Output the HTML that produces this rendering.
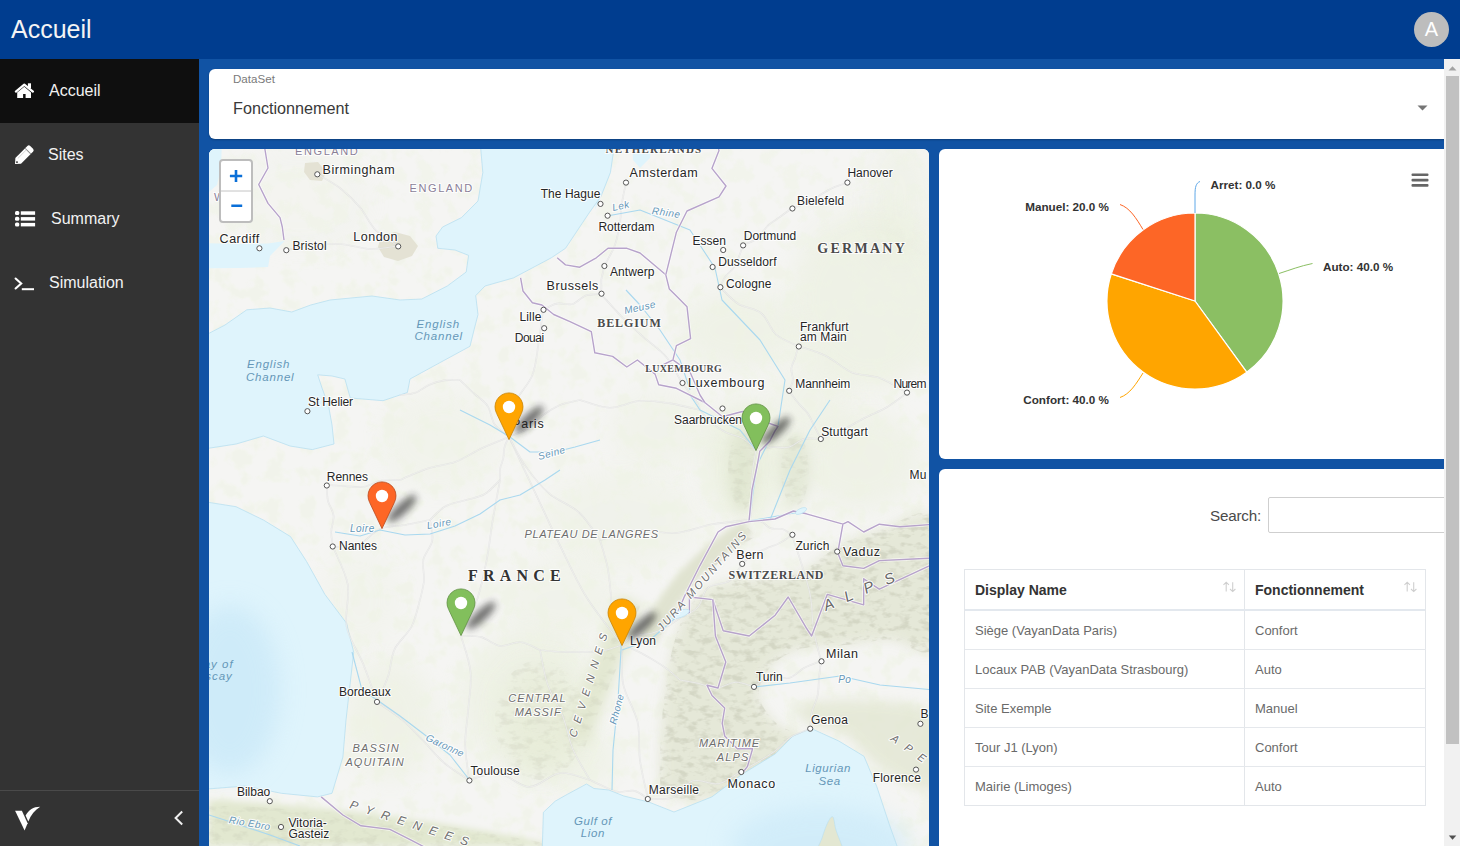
<!DOCTYPE html>
<html><head><meta charset="utf-8">
<style>
*{box-sizing:border-box}
html,body{margin:0;padding:0;width:1460px;height:846px;overflow:hidden;font-family:"Liberation Sans",sans-serif;background:#1153a4}
.abs{position:absolute}
#hdr{left:0;top:0;width:1460px;height:59px;background:#003d8f}
#hdr .t{left:11px;top:14px;font-size:25px;color:#f4f4f4;line-height:30px}
#avatar{left:1414px;top:12px;width:35px;height:35px;border-radius:50%;background:#bdbdbd;color:#fff;font-size:20px;text-align:center;line-height:35px}
#side{left:0;top:59px;width:199px;height:787px;background:#333333}
.item{left:0;width:199px;height:64px;color:#f2f2f2;font-size:16px}
.item .lbl{position:absolute;top:22px;line-height:20px}
#main{left:199px;top:59px;width:1246px;height:787px;background:#1153a4;overflow:hidden}
.card{position:absolute;background:#fff;border-radius:6px}
#scroll{left:1444px;top:59px;width:16px;height:787px;background:#f1f1f1}
.th{font-size:14px;font-weight:bold;color:#333;line-height:18px}
.td{font-size:13px;color:#6a6a6a;letter-spacing:0px;line-height:18px}
.sort{font-size:13px;color:#c8c8c8;letter-spacing:-2px;line-height:14px}
</style></head>
<body>
<div id="hdr" class="abs"><div class="t abs">Accueil</div><div id="avatar" class="abs">A</div></div>
<div id="side" class="abs">
  <div class="item abs" style="top:0;background:#0f0f0f"><div class="lbl" style="left:49px">Accueil</div></div>
  <div class="item abs" style="top:64px"><div class="lbl" style="left:48px">Sites</div></div>
  <div class="item abs" style="top:128px"><div class="lbl" style="left:51px">Summary</div></div>
  <div class="item abs" style="top:192px"><div class="lbl" style="left:49px">Simulation</div></div>
  <div class="abs" style="left:0;top:731px;width:199px;height:1px;background:#4a4a4a"></div>
  <svg class="abs" style="left:0;top:0" width="199" height="787" viewBox="0 59 199 787">
    <!-- home -->
    <path d="M15.9,91.6 L24.3,84.6 L32.9,91.6" fill="none" stroke="#fff" stroke-width="2.3" stroke-linecap="round" stroke-linejoin="round"/>
    <rect x="27.9" y="83.3" width="3.1" height="5" fill="#fff"/>
    <path d="M17.2,92.6 L24.3,86.8 L31,92.4 L31,98 L25.6,98 L25.6,94 L23.1,94 L23.1,98 L17.2,98 Z" fill="#fff"/>
    <!-- pencil -->
    <g transform="translate(15,164) rotate(-45)">
      <path d="M0,0 L4.5,-4 L19,-4 L19,4 L4.5,4 Z" fill="#fff"/>
      <path d="M18,-4 L21.5,-4 Q23.5,-4 23.5,-2 L23.5,2 Q23.5,4 21.5,4 L18,4 Z" fill="#fff"/>
      <rect x="17.8" y="-4" width="0.9" height="8" fill="#888"/>
      <rect x="6" y="-2.2" width="12" height="0.5" fill="#bbb"/>
      <circle cx="2.8" cy="0" r="0.9" fill="#333"/>
    </g>
    <!-- list -->
    <g fill="#fff">
      <rect x="15" y="211" width="4.3" height="4" rx="1.5"/>
      <rect x="15" y="216.8" width="4.3" height="4" rx="1.5"/>
      <rect x="15" y="222.6" width="4.3" height="4" rx="1.5"/>
      <rect x="20.8" y="211.3" width="14.3" height="3.5"/>
      <rect x="20.8" y="217.1" width="14.3" height="3.5"/>
      <rect x="20.8" y="222.9" width="14.3" height="3.5"/>
    </g>
    <!-- terminal -->
    <path d="M15.6,278.5 L21.2,283.5 L15.6,288.5" fill="none" stroke="#fff" stroke-width="2.1" stroke-linecap="round" stroke-linejoin="miter"/>
    <rect x="21.8" y="288.2" width="12.2" height="2" fill="#fff"/>
    <!-- logo -->
    <path d="M15.1,810.8 L21.9,810.8 L27.6,823.2 L24.6,830.6 Z" fill="#fff"/>
    <path d="M25.6,815.6 C29,810 33,806.8 40.2,806.8 C35,810 31,815 28.3,821.5 Z" fill="#fff"/>
    <!-- chevron -->
    <path d="M182.2,811.5 L175.6,818 L182.2,824.5" fill="none" stroke="#f0f0f0" stroke-width="2"/>
  </svg>
</div>
<div id="main" class="abs">
  <div class="card" style="left:10px;top:10px;width:1260px;height:70px;box-shadow:0 1px 2px rgba(0,0,0,0.25)">
    <div class="abs" style="left:24px;top:3px;font-size:11.6px;color:#7a7a7a;line-height:14px">DataSet</div>
    <div class="abs" style="left:24px;top:29px;font-size:16.2px;color:#3a3a3a;line-height:20px">Fonctionnement</div>
    <svg class="abs" style="left:1208px;top:35.5px" width="12" height="7"><path d="M0.5,0.5 L10.5,0.5 L5.5,5.5 Z" fill="#757575"/></svg>
  </div>
  <div class="card" id="map" style="left:10px;top:90px;width:720px;height:720px;overflow:hidden;background:#f3f3ef"><!--MAP--><svg class="abs" style="left:0;top:0" width="720" height="697" viewBox="209 149 720 697" font-family="Liberation Sans, sans-serif">
<defs>
<filter id="blur6" x="-50%" y="-50%" width="200%" height="200%"><feGaussianBlur stdDeviation="6"/></filter>
<filter id="blur12" x="-50%" y="-50%" width="200%" height="200%"><feGaussianBlur stdDeviation="12"/></filter>
<filter id="blur3" x="-50%" y="-50%" width="200%" height="200%"><feGaussianBlur stdDeviation="3"/></filter>
<filter id="shblur" x="-100%" y="-100%" width="300%" height="300%"><feGaussianBlur stdDeviation="3.6"/></filter>
<filter id="noise" x="0" y="0" width="100%" height="100%">
  <feTurbulence type="fractalNoise" baseFrequency="0.09 0.16" numOctaves="3" seed="11" result="t"/>
  <feColorMatrix in="t" type="matrix" values="0 0 0 0 0.50  0 0 0 0 0.51  0 0 0 0 0.40  0 0 0 -4.0 2.05"/>
</filter>
<filter id="forest" x="0" y="0" width="100%" height="100%">
  <feTurbulence type="fractalNoise" baseFrequency="0.06" numOctaves="3" seed="23" result="t"/>
  <feColorMatrix in="t" type="matrix" values="0 0 0 0 0.86  0 0 0 0 0.90  0 0 0 0 0.78  0 0 0 5.0 -2.4"/>
</filter>
<clipPath id="mcclip"><ellipse cx="540" cy="720" rx="45" ry="60"/><path d="M209,805 C300,808 420,818 560,846 L209,846 Z"/><ellipse cx="742" cy="470" rx="14" ry="40"/><ellipse cx="795" cy="470" rx="14" ry="36"/><path d="M568,745 C585,700 605,660 626,600 L640,606 C620,665 600,705 584,750 Z"/></clipPath>
<clipPath id="alpsclip"><path d="M660.0,780.0 C659.0,767.5 660.3,740.0 662.0,720.0 C663.7,700.0 666.0,678.0 670.0,660.0 C674.0,642.0 678.5,624.5 686.0,612.0 C693.5,599.5 702.7,590.7 715.0,585.0 C727.3,579.3 745.8,580.2 760.0,578.0 C774.2,575.8 786.7,577.5 800.0,572.0 C813.3,566.5 826.7,552.0 840.0,545.0 C853.3,538.0 864.2,534.2 880.0,530.0 C895.8,525.8 925.8,500.8 935.0,520.0 C944.2,539.2 942.5,625.0 935.0,645.0 C927.5,665.0 905.0,640.0 890.0,640.0 C875.0,640.0 859.2,643.7 845.0,645.0 C830.8,646.3 816.2,645.5 805.0,648.0 C793.8,650.5 785.2,654.7 778.0,660.0 C770.8,665.3 765.0,673.3 762.0,680.0 C759.0,686.7 757.8,693.0 760.0,700.0 C762.2,707.0 768.0,715.0 775.0,722.0 C782.0,729.0 801.8,733.7 802.0,742.0 C802.2,750.3 786.0,764.0 776.0,772.0 C766.0,780.0 754.7,785.3 742.0,790.0 C729.3,794.7 712.3,799.2 700.0,800.0 C687.7,800.8 674.7,798.3 668.0,795.0 C661.3,791.7 661.0,792.5 660.0,780.0 Z"/><path d="M648,640 C668,592 700,556 748,528 L756,536 C708,566 676,600 656,646 Z"/></clipPath>
</defs>
<rect x="209" y="149" width="720" height="697" fill="#f5f5f3"/>
<ellipse cx="745" cy="460" rx="40" ry="60" fill="#e4ecd2" opacity="0.56" filter="url(#blur12)"/>
<ellipse cx="870" cy="300" rx="80" ry="90" fill="#e4ecd2" opacity="0.39" filter="url(#blur12)"/>
<ellipse cx="740" cy="330" rx="60" ry="40" fill="#e4ecd2" opacity="0.35" filter="url(#blur12)"/>
<ellipse cx="530" cy="700" rx="70" ry="70" fill="#e4ecd2" opacity="0.39" filter="url(#blur12)"/>
<ellipse cx="620" cy="520" rx="80" ry="50" fill="#e4ecd2" opacity="0.24" filter="url(#blur12)"/>
<ellipse cx="390" cy="720" rx="45" ry="60" fill="#e4ecd2" opacity="0.35" filter="url(#blur12)"/>
<ellipse cx="300" cy="200" rx="70" ry="50" fill="#e4ecd2" opacity="0.10" filter="url(#blur12)"/>
<ellipse cx="570" cy="760" rx="50" ry="30" fill="#e4ecd2" opacity="0.32" filter="url(#blur12)"/>
<ellipse cx="860" cy="460" rx="60" ry="50" fill="#e4ecd2" opacity="0.35" filter="url(#blur12)"/>
<ellipse cx="440" cy="440" rx="60" ry="50" fill="#e4ecd2" opacity="0.21" filter="url(#blur12)"/>
<ellipse cx="900" cy="200" rx="30" ry="60" fill="#e4ecd2" opacity="0.28" filter="url(#blur12)"/>
<ellipse cx="660" cy="430" rx="50" ry="40" fill="#e4ecd2" opacity="0.24" filter="url(#blur12)"/>
<ellipse cx="560" cy="600" rx="60" ry="40" fill="#e4ecd2" opacity="0.24" filter="url(#blur12)"/>
<ellipse cx="360" cy="600" rx="40" ry="50" fill="#e4ecd2" opacity="0.17" filter="url(#blur12)"/>
<ellipse cx="810" cy="400" rx="40" ry="40" fill="#e4ecd2" opacity="0.28" filter="url(#blur12)"/>
<rect x="209" y="149" width="720" height="697" fill="#000" filter="url(#forest)" opacity="0.55"/>
<path d="M660.0,780.0 C659.0,767.5 660.3,740.0 662.0,720.0 C663.7,700.0 666.0,678.0 670.0,660.0 C674.0,642.0 678.5,624.5 686.0,612.0 C693.5,599.5 702.7,590.7 715.0,585.0 C727.3,579.3 745.8,580.2 760.0,578.0 C774.2,575.8 786.7,577.5 800.0,572.0 C813.3,566.5 826.7,552.0 840.0,545.0 C853.3,538.0 864.2,534.2 880.0,530.0 C895.8,525.8 925.8,500.8 935.0,520.0 C944.2,539.2 942.5,625.0 935.0,645.0 C927.5,665.0 905.0,640.0 890.0,640.0 C875.0,640.0 859.2,643.7 845.0,645.0 C830.8,646.3 816.2,645.5 805.0,648.0 C793.8,650.5 785.2,654.7 778.0,660.0 C770.8,665.3 765.0,673.3 762.0,680.0 C759.0,686.7 757.8,693.0 760.0,700.0 C762.2,707.0 768.0,715.0 775.0,722.0 C782.0,729.0 801.8,733.7 802.0,742.0 C802.2,750.3 786.0,764.0 776.0,772.0 C766.0,780.0 754.7,785.3 742.0,790.0 C729.3,794.7 712.3,799.2 700.0,800.0 C687.7,800.8 674.7,798.3 668.0,795.0 C661.3,791.7 661.0,792.5 660.0,780.0 Z" fill="#e4e7d6" opacity="0.9" filter="url(#blur6)"/>
<path d="M800.0,705.0 C809.2,701.3 837.5,698.3 860.0,700.0 C882.5,701.7 922.5,700.0 935.0,715.0 C947.5,730.0 944.2,781.2 935.0,790.0 C925.8,798.8 895.0,777.2 880.0,768.0 C865.0,758.8 857.5,742.7 845.0,735.0 C832.5,727.3 812.5,727.0 805.0,722.0 C797.5,717.0 790.8,708.7 800.0,705.0 Z" fill="#e3e7d3" opacity="0.8" filter="url(#blur6)"/>
<g clip-path="url(#alpsclip)"><rect x="640" y="490" width="300" height="320" fill="#000" filter="url(#noise)" opacity="0.4"/></g>
<path d="M648,640 C668,592 700,556 748,528" stroke="#e0e3d0" stroke-width="18" fill="none" filter="url(#blur3)"/>
<ellipse cx="742" cy="470" rx="14" ry="42" fill="#dfe5cf" opacity="0.8" filter="url(#blur6)"/>
<ellipse cx="795" cy="470" rx="16" ry="38" fill="#dfe5cf" opacity="0.7" filter="url(#blur6)"/>
<path d="M209,800 C300,805 420,815 560,846 L209,846 Z" fill="#e2e8d0" filter="url(#blur3)"/>
<ellipse cx="540" cy="720" rx="40" ry="55" fill="#e6ebd6" opacity="0.7" filter="url(#blur12)"/>
<path d="M575,740 C590,700 610,660 630,600" stroke="#e3e8d2" stroke-width="26" fill="none" filter="url(#blur6)"/>
<g clip-path="url(#mcclip)"><rect x="209" y="400" width="620" height="446" fill="#000" filter="url(#noise)" opacity="0.2"/></g>
<path d="M381,236 L395,232 L410,236 L418,246 L412,256 L398,261 L384,257 L378,247 Z" fill="#e4e2d4"/>
<path d="M305,163 L318,162 L326,172 L322,181 L310,180 L304,172 Z" fill="#e4e2d4"/>
<path d="M480.0,140.0 L482.8,172.6 L478.0,201.0 L461.5,217.6 L442.6,227.0 L436.0,236.0 L437.8,248.3 L455.0,250.0 L468.6,255.4 L466.2,272.0 L447.3,286.0 L421.8,299.0 L400.0,300.0 L372.0,296.0 L350.9,298.0 L330.0,300.0 L310.7,305.0 L291.8,312.0 L270.0,308.0 L246.8,309.8 L225.0,325.0 L200.0,338.0 L200.0,449.6 L236.2,444.0 L263.4,436.0 L290.0,446.0 L312.3,449.6 L334.0,444.0 L332.0,425.0 L328.6,406.0 L322.0,388.0 L317.7,374.8 L332.0,376.0 L344.9,379.0 L350.3,398.0 L383.0,400.7 L407.4,392.5 L410.0,379.0 L440.0,362.6 L470.0,346.3 L474.0,330.0 L478.0,314.5 L475.7,295.6 L485.0,286.0 L513.5,277.9 L551.3,257.8 L565.5,248.3 L579.7,227.0 L589.2,212.8 L601.0,196.3 L610.4,172.6 L615.2,140.0 Z" fill="#dff4fc"/>
<path d="M200.0,243.0 L240.0,244.0 L268.0,243.6 L284.7,241.0 L270.0,256.0 L268.0,267.0 L240.0,268.0 L200.0,268.4 Z" fill="#dff4fc"/>
<path d="M200.0,140.0 L222.0,140.0 L221.0,168.0 L217.0,185.0 L209.0,192.0 L200.0,192.0 Z" fill="#dff4fc"/>
<path d="M200.0,501.0 L236.0,506.7 L263.4,520.0 L290.5,536.6 L306.7,561.7 L324.8,594.3 L346.5,623.2 L353.7,652.2 L350.0,684.7 L346.0,720.0 L342.9,757.0 L332.0,793.3 L317.5,796.9 L281.4,793.3 L245.2,786.0 L200.0,789.6 Z" fill="#dff4fc"/>
<path d="M541.9,860.0 L543.4,812.3 L555.3,801.1 L567.2,794.4 L586.5,784.0 L594.0,788.5 L608.9,790.0 L623.8,796.0 L648.7,802.0 L674.0,812.0 L712.0,796.8 L742.5,774.0 L775.4,753.8 L793.0,736.0 L811.0,728.4 L838.8,741.0 L864.0,756.3 L876.8,786.7 L889.4,824.7 L902.0,860.0 Z" fill="#dff4fc"/>
<path d="M600.0,140.0 L615.2,140.0 L610.4,172.6 L601.0,196.3 L595.0,210.0 Z" fill="#dff4fc"/>
<path d="M632.0,140.0 L652.0,140.0 L650.0,158.0 L640.0,168.0 L633.0,160.0 Z" fill="#dff4fc"/>
<ellipse cx="230" cy="690" rx="50" ry="85" fill="#c9e8f8" opacity="0.75" filter="url(#blur12)"/>
<ellipse cx="820" cy="846" rx="90" ry="40" fill="#c9e8f8" opacity="0.6" filter="url(#blur12)"/>
<path d="M816.0,860.0 C812.0,856.3 820.0,844.3 822.0,838.0 C824.0,831.7 826.2,825.5 828.0,822.0 C829.8,818.5 831.7,815.7 833.0,817.0 C834.3,818.3 834.5,825.2 836.0,830.0 C837.5,834.8 840.3,841.0 842.0,846.0 C843.7,851.0 850.3,857.7 846.0,860.0 C841.7,862.3 820.0,863.7 816.0,860.0 Z" fill="#e3e7d2" stroke="#b9dff0" stroke-width="0.6"/>
<path d="M480.0,140.0 L482.8,172.6 L478.0,201.0 L461.5,217.6 L442.6,227.0 L436.0,236.0 L437.8,248.3 L455.0,250.0 L468.6,255.4 L466.2,272.0 L447.3,286.0 L421.8,299.0 L400.0,300.0 L372.0,296.0 L350.9,298.0 L330.0,300.0 L310.7,305.0 L291.8,312.0 L270.0,308.0 L246.8,309.8 L225.0,325.0 L200.0,338.0 L200.0,449.6 L236.2,444.0 L263.4,436.0 L290.0,446.0 L312.3,449.6 L334.0,444.0 L332.0,425.0 L328.6,406.0 L322.0,388.0 L317.7,374.8 L332.0,376.0 L344.9,379.0 L350.3,398.0 L383.0,400.7 L407.4,392.5 L410.0,379.0 L440.0,362.6 L470.0,346.3 L474.0,330.0 L478.0,314.5 L475.7,295.6 L485.0,286.0 L513.5,277.9 L551.3,257.8 L565.5,248.3 L579.7,227.0 L589.2,212.8 L601.0,196.3 L610.4,172.6 L615.2,140.0" fill="none" stroke="#b9dff0" stroke-width="0.8"/>
<path d="M200.0,501.0 L236.0,506.7 L263.4,520.0 L290.5,536.6 L306.7,561.7 L324.8,594.3 L346.5,623.2 L353.7,652.2 L350.0,684.7 L346.0,720.0 L342.9,757.0 L332.0,793.3 L317.5,796.9 L281.4,793.3 L245.2,786.0 L200.0,789.6" fill="none" stroke="#b9dff0" stroke-width="0.8"/>
<path d="M541.9,860.0 L543.4,812.3 L555.3,801.1 L567.2,794.4 L586.5,784.0 L594.0,788.5 L608.9,790.0 L623.8,796.0 L648.7,802.0 L674.0,812.0 L712.0,796.8 L742.5,774.0 L775.4,753.8 L793.0,736.0 L811.0,728.4 L838.8,741.0 L864.0,756.3 L876.8,786.7 L889.4,824.7 L902.0,860.0" fill="none" stroke="#b9dff0" stroke-width="0.8"/>
<path d="M509.0,437.0 C513.2,445.9 525.8,472.8 534.2,490.7 C542.6,508.5 550.8,526.6 559.5,544.3 C568.2,562.0 576.0,580.2 586.4,597.0 C596.8,613.8 616.1,637.0 622.0,645.0" fill="none" stroke="#d6d6d6" stroke-width="1.6" opacity="0.55"/>
<path d="M509.0,437.0 C513.2,445.9 525.8,472.8 534.2,490.7 C542.6,508.5 550.8,526.6 559.5,544.3 C568.2,562.0 576.0,580.2 586.4,597.0 C596.8,613.8 616.1,637.0 622.0,645.0" fill="none" stroke="#fbfbfb" stroke-width="0.6" opacity="0.8"/>
<path d="M509.0,437.0 C508.2,438.7 505.4,443.7 504.5,447.3 C503.5,450.8 504.0,454.7 503.3,458.2 C502.5,461.8 500.6,465.2 500.1,468.8 C499.5,472.4 500.0,478.1 500.0,480.0" fill="none" stroke="#d6d6d6" stroke-width="1.6" opacity="0.55"/>
<path d="M509.0,437.0 C508.2,438.7 505.4,443.7 504.5,447.3 C503.5,450.8 504.0,454.7 503.3,458.2 C502.5,461.8 500.6,465.2 500.1,468.8 C499.5,472.4 500.0,478.1 500.0,480.0" fill="none" stroke="#fbfbfb" stroke-width="0.6" opacity="0.8"/>
<path d="M500.0,480.0 C497.5,482.3 490.6,490.6 484.8,494.0 C479.0,497.3 471.7,498.2 465.2,500.3 C458.6,502.3 451.2,503.0 445.4,506.3 C439.5,509.6 432.6,517.7 430.0,520.0" fill="none" stroke="#d6d6d6" stroke-width="1.6" opacity="0.55"/>
<path d="M500.0,480.0 C497.5,482.3 490.6,490.6 484.8,494.0 C479.0,497.3 471.7,498.2 465.2,500.3 C458.6,502.3 451.2,503.0 445.4,506.3 C439.5,509.6 432.6,517.7 430.0,520.0" fill="none" stroke="#fbfbfb" stroke-width="0.6" opacity="0.8"/>
<path d="M430.0,520.0 C425.9,520.8 413.6,523.5 405.3,525.0 C397.0,526.5 388.0,525.5 380.2,528.8 C372.4,532.1 366.4,541.7 358.5,544.8 C350.6,547.8 337.3,546.6 333.0,547.0" fill="none" stroke="#d6d6d6" stroke-width="1.6" opacity="0.55"/>
<path d="M430.0,520.0 C425.9,520.8 413.6,523.5 405.3,525.0 C397.0,526.5 388.0,525.5 380.2,528.8 C372.4,532.1 366.4,541.7 358.5,544.8 C350.6,547.8 337.3,546.6 333.0,547.0" fill="none" stroke="#fbfbfb" stroke-width="0.6" opacity="0.8"/>
<path d="M509.0,437.0 C504.5,438.9 490.8,444.0 481.9,448.2 C473.0,452.3 465.0,458.4 455.8,461.8 C446.7,465.2 436.3,465.6 427.0,468.7 C417.7,471.7 404.5,478.1 400.0,480.0" fill="none" stroke="#d6d6d6" stroke-width="1.6" opacity="0.55"/>
<path d="M509.0,437.0 C504.5,438.9 490.8,444.0 481.9,448.2 C473.0,452.3 465.0,458.4 455.8,461.8 C446.7,465.2 436.3,465.6 427.0,468.7 C417.7,471.7 404.5,478.1 400.0,480.0" fill="none" stroke="#fbfbfb" stroke-width="0.6" opacity="0.8"/>
<path d="M400.0,480.0 C397.0,480.1 387.7,479.5 381.7,480.6 C375.7,481.7 369.8,485.8 363.8,486.8 C357.7,487.7 351.6,486.5 345.4,486.2 C339.3,485.9 330.1,485.2 327.0,485.0" fill="none" stroke="#d6d6d6" stroke-width="1.6" opacity="0.55"/>
<path d="M400.0,480.0 C397.0,480.1 387.7,479.5 381.7,480.6 C375.7,481.7 369.8,485.8 363.8,486.8 C357.7,487.7 351.6,486.5 345.4,486.2 C339.3,485.9 330.1,485.2 327.0,485.0" fill="none" stroke="#fbfbfb" stroke-width="0.6" opacity="0.8"/>
<path d="M509.0,437.0 C509.9,431.6 510.2,414.7 514.1,404.4 C518.0,394.1 528.3,385.5 532.3,375.2 C536.4,364.9 536.8,353.7 538.5,342.8 C540.3,332.0 542.3,315.5 543.0,310.0" fill="none" stroke="#d6d6d6" stroke-width="1.6" opacity="0.55"/>
<path d="M509.0,437.0 C509.9,431.6 510.2,414.7 514.1,404.4 C518.0,394.1 528.3,385.5 532.3,375.2 C536.4,364.9 536.8,353.7 538.5,342.8 C540.3,332.0 542.3,315.5 543.0,310.0" fill="none" stroke="#fbfbfb" stroke-width="0.6" opacity="0.8"/>
<path d="M543.0,310.0 C545.3,308.9 551.9,304.6 556.8,303.6 C561.8,302.6 567.7,305.4 572.6,304.1 C577.4,302.7 581.1,297.2 585.8,295.5 C590.5,293.8 598.5,294.2 601.0,294.0" fill="none" stroke="#d6d6d6" stroke-width="1.6" opacity="0.55"/>
<path d="M543.0,310.0 C545.3,308.9 551.9,304.6 556.8,303.6 C561.8,302.6 567.7,305.4 572.6,304.1 C577.4,302.7 581.1,297.2 585.8,295.5 C590.5,293.8 598.5,294.2 601.0,294.0" fill="none" stroke="#fbfbfb" stroke-width="0.6" opacity="0.8"/>
<path d="M509.0,437.0 C512.0,435.6 521.6,432.4 527.3,428.8 C532.9,425.1 537.4,419.3 542.8,415.3 C548.3,411.4 553.8,407.6 560.0,405.0 C566.2,402.5 576.7,400.8 580.0,400.0" fill="none" stroke="#d6d6d6" stroke-width="1.6" opacity="0.55"/>
<path d="M509.0,437.0 C512.0,435.6 521.6,432.4 527.3,428.8 C532.9,425.1 537.4,419.3 542.8,415.3 C548.3,411.4 553.8,407.6 560.0,405.0 C566.2,402.5 576.7,400.8 580.0,400.0" fill="none" stroke="#fbfbfb" stroke-width="0.6" opacity="0.8"/>
<path d="M580.0,400.0 C584.9,401.3 599.5,407.7 609.6,407.8 C619.6,408.0 630.2,401.6 640.3,400.8 C650.5,400.1 660.4,401.9 670.3,403.4 C680.3,404.9 695.1,408.9 700.0,410.0" fill="none" stroke="#d6d6d6" stroke-width="1.6" opacity="0.55"/>
<path d="M580.0,400.0 C584.9,401.3 599.5,407.7 609.6,407.8 C619.6,408.0 630.2,401.6 640.3,400.8 C650.5,400.1 660.4,401.9 670.3,403.4 C680.3,404.9 695.1,408.9 700.0,410.0" fill="none" stroke="#fbfbfb" stroke-width="0.6" opacity="0.8"/>
<path d="M700.0,410.0 C701.9,412.2 707.3,419.5 711.7,423.2 C716.1,427.0 721.0,429.9 726.2,432.5 C731.4,435.1 738.0,435.7 743.0,438.6 C748.0,441.5 753.8,448.1 756.0,450.0" fill="none" stroke="#d6d6d6" stroke-width="1.6" opacity="0.55"/>
<path d="M700.0,410.0 C701.9,412.2 707.3,419.5 711.7,423.2 C716.1,427.0 721.0,429.9 726.2,432.5 C731.4,435.1 738.0,435.7 743.0,438.6 C748.0,441.5 753.8,448.1 756.0,450.0" fill="none" stroke="#fbfbfb" stroke-width="0.6" opacity="0.8"/>
<path d="M700.0,410.0 C699.5,408.7 698.5,404.5 697.0,402.3 C695.5,400.0 692.8,398.6 691.1,396.4 C689.5,394.3 688.6,391.6 687.1,389.4 C685.6,387.1 682.8,384.1 682.0,383.0" fill="none" stroke="#d6d6d6" stroke-width="1.6" opacity="0.55"/>
<path d="M700.0,410.0 C699.5,408.7 698.5,404.5 697.0,402.3 C695.5,400.0 692.8,398.6 691.1,396.4 C689.5,394.3 688.6,391.6 687.1,389.4 C685.6,387.1 682.8,384.1 682.0,383.0" fill="none" stroke="#fbfbfb" stroke-width="0.6" opacity="0.8"/>
<path d="M509.0,437.0 C506.6,434.9 498.3,429.7 494.7,424.5 C491.2,419.3 491.0,411.1 487.5,405.9 C484.0,400.7 478.1,397.4 473.6,393.1 C469.0,388.8 462.3,382.2 460.0,380.0" fill="none" stroke="#d6d6d6" stroke-width="1.6" opacity="0.55"/>
<path d="M509.0,437.0 C506.6,434.9 498.3,429.7 494.7,424.5 C491.2,419.3 491.0,411.1 487.5,405.9 C484.0,400.7 478.1,397.4 473.6,393.1 C469.0,388.8 462.3,382.2 460.0,380.0" fill="none" stroke="#fbfbfb" stroke-width="0.6" opacity="0.8"/>
<path d="M460.0,380.0 C457.4,380.1 449.3,379.6 444.2,380.4 C439.0,381.2 434.1,382.6 429.3,384.7 C424.5,386.7 420.2,391.0 415.4,392.7 C410.5,394.4 402.6,394.6 400.0,395.0" fill="none" stroke="#d6d6d6" stroke-width="1.6" opacity="0.55"/>
<path d="M460.0,380.0 C457.4,380.1 449.3,379.6 444.2,380.4 C439.0,381.2 434.1,382.6 429.3,384.7 C424.5,386.7 420.2,391.0 415.4,392.7 C410.5,394.4 402.6,394.6 400.0,395.0" fill="none" stroke="#fbfbfb" stroke-width="0.6" opacity="0.8"/>
<path d="M500.0,480.0 C498.8,486.6 495.1,506.4 492.8,519.6 C490.6,532.9 489.3,546.4 486.8,559.6 C484.2,572.7 481.7,585.9 477.4,598.7 C473.1,611.4 463.7,629.8 461.0,636.0" fill="none" stroke="#d6d6d6" stroke-width="1.6" opacity="0.55"/>
<path d="M500.0,480.0 C498.8,486.6 495.1,506.4 492.8,519.6 C490.6,532.9 489.3,546.4 486.8,559.6 C484.2,572.7 481.7,585.9 477.4,598.7 C473.1,611.4 463.7,629.8 461.0,636.0" fill="none" stroke="#fbfbfb" stroke-width="0.6" opacity="0.8"/>
<path d="M461.0,636.0 C462.6,641.9 469.3,659.6 470.5,671.6 C471.8,683.6 469.3,695.7 468.4,707.8 C467.5,719.9 465.1,732.1 465.2,744.1 C465.3,756.1 468.4,774.0 469.0,780.0" fill="none" stroke="#d6d6d6" stroke-width="1.6" opacity="0.55"/>
<path d="M461.0,636.0 C462.6,641.9 469.3,659.6 470.5,671.6 C471.8,683.6 469.3,695.7 468.4,707.8 C467.5,719.9 465.1,732.1 465.2,744.1 C465.3,756.1 468.4,774.0 469.0,780.0" fill="none" stroke="#fbfbfb" stroke-width="0.6" opacity="0.8"/>
<path d="M430.0,520.0 C430.4,523.4 433.4,534.0 432.3,540.6 C431.1,547.2 424.7,553.2 423.3,559.8 C421.9,566.4 424.6,573.5 424.1,580.2 C423.5,586.9 420.7,596.7 420.0,600.0" fill="none" stroke="#d6d6d6" stroke-width="1.6" opacity="0.55"/>
<path d="M430.0,520.0 C430.4,523.4 433.4,534.0 432.3,540.6 C431.1,547.2 424.7,553.2 423.3,559.8 C421.9,566.4 424.6,573.5 424.1,580.2 C423.5,586.9 420.7,596.7 420.0,600.0" fill="none" stroke="#fbfbfb" stroke-width="0.6" opacity="0.8"/>
<path d="M420.0,600.0 C418.6,604.4 415.8,618.3 411.6,626.5 C407.3,634.7 398.5,641.0 394.6,649.4 C390.7,657.7 390.9,667.8 388.0,676.6 C385.1,685.4 378.8,697.8 377.0,702.0" fill="none" stroke="#d6d6d6" stroke-width="1.6" opacity="0.55"/>
<path d="M420.0,600.0 C418.6,604.4 415.8,618.3 411.6,626.5 C407.3,634.7 398.5,641.0 394.6,649.4 C390.7,657.7 390.9,667.8 388.0,676.6 C385.1,685.4 378.8,697.8 377.0,702.0" fill="none" stroke="#fbfbfb" stroke-width="0.6" opacity="0.8"/>
<path d="M377.0,702.0 C381.1,704.9 394.0,713.0 401.7,719.5 C409.4,725.9 416.1,733.6 423.2,740.8 C430.2,748.0 436.4,756.2 444.1,762.8 C451.7,769.3 464.8,777.1 469.0,780.0" fill="none" stroke="#d6d6d6" stroke-width="1.6" opacity="0.55"/>
<path d="M377.0,702.0 C381.1,704.9 394.0,713.0 401.7,719.5 C409.4,725.9 416.1,733.6 423.2,740.8 C430.2,748.0 436.4,756.2 444.1,762.8 C451.7,769.3 464.8,777.1 469.0,780.0" fill="none" stroke="#fbfbfb" stroke-width="0.6" opacity="0.8"/>
<path d="M469.0,780.0 C474.0,778.9 489.2,772.4 499.2,773.6 C509.3,774.7 519.4,787.0 529.5,786.9 C539.6,786.8 549.7,774.2 559.8,773.1 C569.8,771.9 585.0,778.8 590.0,780.0" fill="none" stroke="#d6d6d6" stroke-width="1.6" opacity="0.55"/>
<path d="M469.0,780.0 C474.0,778.9 489.2,772.4 499.2,773.6 C509.3,774.7 519.4,787.0 529.5,786.9 C539.6,786.8 549.7,774.2 559.8,773.1 C569.8,771.9 585.0,778.8 590.0,780.0" fill="none" stroke="#fbfbfb" stroke-width="0.6" opacity="0.8"/>
<path d="M590.0,780.0 C592.3,781.1 599.2,784.5 603.9,786.5 C608.6,788.5 613.1,791.2 618.2,791.9 C623.3,792.6 629.6,789.7 634.6,790.9 C639.6,792.1 645.8,797.6 648.0,799.0" fill="none" stroke="#d6d6d6" stroke-width="1.6" opacity="0.55"/>
<path d="M590.0,780.0 C592.3,781.1 599.2,784.5 603.9,786.5 C608.6,788.5 613.1,791.2 618.2,791.9 C623.3,792.6 629.6,789.7 634.6,790.9 C639.6,792.1 645.8,797.6 648.0,799.0" fill="none" stroke="#fbfbfb" stroke-width="0.6" opacity="0.8"/>
<path d="M622.0,645.0 C622.2,651.6 620.6,671.6 623.2,684.4 C625.8,697.2 634.7,708.9 637.5,721.6 C640.3,734.3 638.3,747.8 640.0,760.7 C641.8,773.6 646.7,792.6 648.0,799.0" fill="none" stroke="#d6d6d6" stroke-width="1.6" opacity="0.55"/>
<path d="M622.0,645.0 C622.2,651.6 620.6,671.6 623.2,684.4 C625.8,697.2 634.7,708.9 637.5,721.6 C640.3,734.3 638.3,747.8 640.0,760.7 C641.8,773.6 646.7,792.6 648.0,799.0" fill="none" stroke="#fbfbfb" stroke-width="0.6" opacity="0.8"/>
<path d="M622.0,645.0 C618.6,646.0 608.6,649.9 601.8,651.1 C595.0,652.2 588.1,651.8 581.3,652.0 C574.4,652.1 567.6,652.2 560.7,651.9 C553.8,651.6 543.4,650.3 540.0,650.0" fill="none" stroke="#d6d6d6" stroke-width="1.6" opacity="0.55"/>
<path d="M622.0,645.0 C618.6,646.0 608.6,649.9 601.8,651.1 C595.0,652.2 588.1,651.8 581.3,652.0 C574.4,652.1 567.6,652.2 560.7,651.9 C553.8,651.6 543.4,650.3 540.0,650.0" fill="none" stroke="#fbfbfb" stroke-width="0.6" opacity="0.8"/>
<path d="M540.0,650.0 C536.8,648.7 527.7,642.9 521.0,642.2 C514.3,641.5 506.6,646.7 500.0,645.9 C493.4,645.0 487.7,638.7 481.2,637.1 C474.7,635.4 464.4,636.2 461.0,636.0" fill="none" stroke="#d6d6d6" stroke-width="1.6" opacity="0.55"/>
<path d="M540.0,650.0 C536.8,648.7 527.7,642.9 521.0,642.2 C514.3,641.5 506.6,646.7 500.0,645.9 C493.4,645.0 487.7,638.7 481.2,637.1 C474.7,635.4 464.4,636.2 461.0,636.0" fill="none" stroke="#fbfbfb" stroke-width="0.6" opacity="0.8"/>
<path d="M509.0,437.0 C511.9,442.1 519.8,458.1 526.4,467.4 C533.1,476.8 540.2,485.8 549.0,493.3 C557.8,500.8 570.7,504.8 579.2,512.6 C587.7,520.3 596.5,535.4 600.0,540.0" fill="none" stroke="#d6d6d6" stroke-width="1.6" opacity="0.55"/>
<path d="M509.0,437.0 C511.9,442.1 519.8,458.1 526.4,467.4 C533.1,476.8 540.2,485.8 549.0,493.3 C557.8,500.8 570.7,504.8 579.2,512.6 C587.7,520.3 596.5,535.4 600.0,540.0" fill="none" stroke="#fbfbfb" stroke-width="0.6" opacity="0.8"/>
<path d="M600.0,540.0 C601.2,544.3 605.5,557.1 607.3,565.9 C609.1,574.6 609.7,583.6 610.7,592.6 C611.6,601.5 611.1,610.7 613.0,619.5 C614.9,628.2 620.5,640.7 622.0,645.0" fill="none" stroke="#d6d6d6" stroke-width="1.6" opacity="0.55"/>
<path d="M600.0,540.0 C601.2,544.3 605.5,557.1 607.3,565.9 C609.1,574.6 609.7,583.6 610.7,592.6 C611.6,601.5 611.1,610.7 613.0,619.5 C614.9,628.2 620.5,640.7 622.0,645.0" fill="none" stroke="#fbfbfb" stroke-width="0.6" opacity="0.8"/>
<path d="M622.0,645.0 C624.2,643.4 630.3,637.5 635.2,635.5 C640.2,633.6 646.6,634.7 651.8,633.2 C657.0,631.8 661.8,629.4 666.5,626.8 C671.2,624.3 677.7,619.5 680.0,618.0" fill="none" stroke="#d6d6d6" stroke-width="1.6" opacity="0.55"/>
<path d="M622.0,645.0 C624.2,643.4 630.3,637.5 635.2,635.5 C640.2,633.6 646.6,634.7 651.8,633.2 C657.0,631.8 661.8,629.4 666.5,626.8 C671.2,624.3 677.7,619.5 680.0,618.0" fill="none" stroke="#fbfbfb" stroke-width="0.6" opacity="0.8"/>
<path d="M680.0,618.0 C683.0,616.2 693.2,612.3 697.8,607.2 C702.5,602.1 702.7,591.9 708.0,587.6 C713.3,583.2 723.7,584.7 729.4,580.8 C735.1,576.9 739.9,566.8 742.0,564.0" fill="none" stroke="#d6d6d6" stroke-width="1.6" opacity="0.55"/>
<path d="M680.0,618.0 C683.0,616.2 693.2,612.3 697.8,607.2 C702.5,602.1 702.7,591.9 708.0,587.6 C713.3,583.2 723.7,584.7 729.4,580.8 C735.1,576.9 739.9,566.8 742.0,564.0" fill="none" stroke="#fbfbfb" stroke-width="0.6" opacity="0.8"/>
<path d="M742.0,564.0 C743.8,562.4 749.0,556.9 753.1,554.3 C757.2,551.7 762.0,550.4 766.4,548.5 C770.9,546.6 775.6,545.2 779.9,542.9 C784.1,540.7 790.0,536.3 792.0,535.0" fill="none" stroke="#d6d6d6" stroke-width="1.6" opacity="0.55"/>
<path d="M742.0,564.0 C743.8,562.4 749.0,556.9 753.1,554.3 C757.2,551.7 762.0,550.4 766.4,548.5 C770.9,546.6 775.6,545.2 779.9,542.9 C784.1,540.7 790.0,536.3 792.0,535.0" fill="none" stroke="#fbfbfb" stroke-width="0.6" opacity="0.8"/>
<path d="M792.0,535.0 C790.4,534.0 785.8,530.3 782.3,529.1 C778.7,528.0 774.2,529.6 770.7,528.3 C767.2,527.1 764.7,523.0 761.3,521.6 C757.8,520.2 751.9,520.3 750.0,520.0" fill="none" stroke="#d6d6d6" stroke-width="1.6" opacity="0.55"/>
<path d="M792.0,535.0 C790.4,534.0 785.8,530.3 782.3,529.1 C778.7,528.0 774.2,529.6 770.7,528.3 C767.2,527.1 764.7,523.0 761.3,521.6 C757.8,520.2 751.9,520.3 750.0,520.0" fill="none" stroke="#fbfbfb" stroke-width="0.6" opacity="0.8"/>
<path d="M750.0,520.0 C750.3,517.1 751.6,508.4 751.9,502.5 C752.1,496.7 751.2,490.7 751.4,484.9 C751.6,479.0 752.2,473.2 753.0,467.4 C753.7,461.6 755.5,452.9 756.0,450.0" fill="none" stroke="#d6d6d6" stroke-width="1.6" opacity="0.55"/>
<path d="M750.0,520.0 C750.3,517.1 751.6,508.4 751.9,502.5 C752.1,496.7 751.2,490.7 751.4,484.9 C751.6,479.0 752.2,473.2 753.0,467.4 C753.7,461.6 755.5,452.9 756.0,450.0" fill="none" stroke="#fbfbfb" stroke-width="0.6" opacity="0.8"/>
<path d="M622.0,645.0 C624.6,646.1 632.7,649.1 637.9,651.5 C643.0,653.9 647.9,656.7 652.8,659.6 C657.6,662.4 662.4,665.4 667.0,668.8 C671.5,672.2 677.8,678.1 680.0,680.0" fill="none" stroke="#d6d6d6" stroke-width="1.6" opacity="0.55"/>
<path d="M622.0,645.0 C624.6,646.1 632.7,649.1 637.9,651.5 C643.0,653.9 647.9,656.7 652.8,659.6 C657.6,662.4 662.4,665.4 667.0,668.8 C671.5,672.2 677.8,678.1 680.0,680.0" fill="none" stroke="#fbfbfb" stroke-width="0.6" opacity="0.8"/>
<path d="M680.0,680.0 C683.1,680.6 692.2,682.1 698.3,683.4 C704.4,684.7 710.3,688.1 716.6,687.9 C722.8,687.7 729.5,682.4 735.8,682.2 C742.0,682.1 751.0,686.2 754.0,687.0" fill="none" stroke="#d6d6d6" stroke-width="1.6" opacity="0.55"/>
<path d="M680.0,680.0 C683.1,680.6 692.2,682.1 698.3,683.4 C704.4,684.7 710.3,688.1 716.6,687.9 C722.8,687.7 729.5,682.4 735.8,682.2 C742.0,682.1 751.0,686.2 754.0,687.0" fill="none" stroke="#fbfbfb" stroke-width="0.6" opacity="0.8"/>
<path d="M754.0,687.0 C756.6,685.3 763.5,678.4 769.3,676.9 C775.2,675.4 783.2,679.4 789.0,677.9 C794.9,676.4 799.0,670.6 804.4,667.8 C809.7,665.0 818.2,662.1 821.0,661.0" fill="none" stroke="#d6d6d6" stroke-width="1.6" opacity="0.55"/>
<path d="M754.0,687.0 C756.6,685.3 763.5,678.4 769.3,676.9 C775.2,675.4 783.2,679.4 789.0,677.9 C794.9,676.4 799.0,670.6 804.4,667.8 C809.7,665.0 818.2,662.1 821.0,661.0" fill="none" stroke="#fbfbfb" stroke-width="0.6" opacity="0.8"/>
<path d="M821.0,661.0 C820.7,663.9 819.6,672.4 819.0,678.1 C818.5,683.8 818.8,689.7 817.6,695.3 C816.5,701.0 813.3,706.3 812.0,711.9 C810.7,717.5 810.3,726.1 810.0,729.0" fill="none" stroke="#d6d6d6" stroke-width="1.6" opacity="0.55"/>
<path d="M821.0,661.0 C820.7,663.9 819.6,672.4 819.0,678.1 C818.5,683.8 818.8,689.7 817.6,695.3 C816.5,701.0 813.3,706.3 812.0,711.9 C810.7,717.5 810.3,726.1 810.0,729.0" fill="none" stroke="#fbfbfb" stroke-width="0.6" opacity="0.8"/>
<path d="M810.0,729.0 C806.8,730.3 796.6,733.4 790.8,737.0 C785.0,740.7 780.7,746.7 775.2,750.9 C769.7,755.0 763.8,758.4 757.9,761.9 C752.0,765.4 743.0,770.3 740.0,772.0" fill="none" stroke="#d6d6d6" stroke-width="1.6" opacity="0.55"/>
<path d="M810.0,729.0 C806.8,730.3 796.6,733.4 790.8,737.0 C785.0,740.7 780.7,746.7 775.2,750.9 C769.7,755.0 763.8,758.4 757.9,761.9 C752.0,765.4 743.0,770.3 740.0,772.0" fill="none" stroke="#fbfbfb" stroke-width="0.6" opacity="0.8"/>
<path d="M740.0,772.0 C736.4,773.9 726.3,782.2 718.4,783.7 C710.5,785.1 700.3,778.6 692.7,780.9 C685.0,783.2 680.0,794.4 672.5,797.4 C665.1,800.4 652.1,798.7 648.0,799.0" fill="none" stroke="#d6d6d6" stroke-width="1.6" opacity="0.55"/>
<path d="M740.0,772.0 C736.4,773.9 726.3,782.2 718.4,783.7 C710.5,785.1 700.3,778.6 692.7,780.9 C685.0,783.2 680.0,794.4 672.5,797.4 C665.1,800.4 652.1,798.7 648.0,799.0" fill="none" stroke="#fbfbfb" stroke-width="0.6" opacity="0.8"/>
<path d="M756.0,450.0 C758.7,449.5 766.8,447.7 772.2,447.2 C777.7,446.7 783.6,448.5 788.9,447.1 C794.3,445.8 798.9,440.2 804.3,438.9 C809.6,437.5 818.2,439.0 821.0,439.0" fill="none" stroke="#d6d6d6" stroke-width="1.6" opacity="0.55"/>
<path d="M756.0,450.0 C758.7,449.5 766.8,447.7 772.2,447.2 C777.7,446.7 783.6,448.5 788.9,447.1 C794.3,445.8 798.9,440.2 804.3,438.9 C809.6,437.5 818.2,439.0 821.0,439.0" fill="none" stroke="#fbfbfb" stroke-width="0.6" opacity="0.8"/>
<path d="M821.0,439.0 C819.9,436.9 816.6,430.4 814.3,426.1 C812.1,421.8 810.4,417.2 807.6,413.3 C804.8,409.3 800.8,406.2 797.8,402.5 C794.7,398.8 790.5,392.9 789.0,391.0" fill="none" stroke="#d6d6d6" stroke-width="1.6" opacity="0.55"/>
<path d="M821.0,439.0 C819.9,436.9 816.6,430.4 814.3,426.1 C812.1,421.8 810.4,417.2 807.6,413.3 C804.8,409.3 800.8,406.2 797.8,402.5 C794.7,398.8 790.5,392.9 789.0,391.0" fill="none" stroke="#fbfbfb" stroke-width="0.6" opacity="0.8"/>
<path d="M789.0,391.0 C789.6,389.2 792.4,383.9 792.8,380.1 C793.2,376.2 790.9,371.9 791.4,368.1 C791.8,364.3 794.3,360.9 795.4,357.2 C796.5,353.5 797.6,347.9 798.0,346.0" fill="none" stroke="#d6d6d6" stroke-width="1.6" opacity="0.55"/>
<path d="M789.0,391.0 C789.6,389.2 792.4,383.9 792.8,380.1 C793.2,376.2 790.9,371.9 791.4,368.1 C791.8,364.3 794.3,360.9 795.4,357.2 C796.5,353.5 797.6,347.9 798.0,346.0" fill="none" stroke="#fbfbfb" stroke-width="0.6" opacity="0.8"/>
<path d="M798.0,346.0 C794.3,344.1 782.1,340.0 776.0,334.5 C769.9,329.1 767.8,318.4 761.4,313.3 C755.1,308.1 745.0,308.0 738.0,303.7 C731.1,299.3 723.0,289.8 720.0,287.0" fill="none" stroke="#d6d6d6" stroke-width="1.6" opacity="0.55"/>
<path d="M798.0,346.0 C794.3,344.1 782.1,340.0 776.0,334.5 C769.9,329.1 767.8,318.4 761.4,313.3 C755.1,308.1 745.0,308.0 738.0,303.7 C731.1,299.3 723.0,289.8 720.0,287.0" fill="none" stroke="#fbfbfb" stroke-width="0.6" opacity="0.8"/>
<path d="M720.0,287.0 C720.9,285.2 723.2,279.6 725.5,276.4 C727.8,273.1 731.8,270.7 734.0,267.4 C736.3,264.1 737.5,260.2 739.0,256.5 C740.5,252.7 742.3,246.9 743.0,245.0" fill="none" stroke="#d6d6d6" stroke-width="1.6" opacity="0.55"/>
<path d="M720.0,287.0 C720.9,285.2 723.2,279.6 725.5,276.4 C727.8,273.1 731.8,270.7 734.0,267.4 C736.3,264.1 737.5,260.2 739.0,256.5 C740.5,252.7 742.3,246.9 743.0,245.0" fill="none" stroke="#fbfbfb" stroke-width="0.6" opacity="0.8"/>
<path d="M743.0,245.0 C745.4,243.9 753.3,241.7 757.4,238.5 C761.4,235.4 763.6,229.8 767.3,226.2 C771.0,222.7 775.6,220.2 779.7,217.2 C783.8,214.1 789.9,209.5 792.0,208.0" fill="none" stroke="#d6d6d6" stroke-width="1.6" opacity="0.55"/>
<path d="M743.0,245.0 C745.4,243.9 753.3,241.7 757.4,238.5 C761.4,235.4 763.6,229.8 767.3,226.2 C771.0,222.7 775.6,220.2 779.7,217.2 C783.8,214.1 789.9,209.5 792.0,208.0" fill="none" stroke="#fbfbfb" stroke-width="0.6" opacity="0.8"/>
<path d="M792.0,208.0 C794.4,207.2 801.9,205.4 806.4,203.3 C811.0,201.2 815.1,197.9 819.4,195.4 C823.8,192.8 828.0,189.9 832.6,187.9 C837.2,185.8 844.6,183.8 847.0,183.0" fill="none" stroke="#d6d6d6" stroke-width="1.6" opacity="0.55"/>
<path d="M792.0,208.0 C794.4,207.2 801.9,205.4 806.4,203.3 C811.0,201.2 815.1,197.9 819.4,195.4 C823.8,192.8 828.0,189.9 832.6,187.9 C837.2,185.8 844.6,183.8 847.0,183.0" fill="none" stroke="#fbfbfb" stroke-width="0.6" opacity="0.8"/>
<path d="M601.0,294.0 C601.1,292.8 601.4,289.3 601.4,287.0 C601.5,284.6 601.1,282.2 601.3,279.9 C601.5,277.5 602.4,275.3 602.8,273.0 C603.3,270.6 603.8,267.2 604.0,266.0" fill="none" stroke="#d6d6d6" stroke-width="1.6" opacity="0.55"/>
<path d="M601.0,294.0 C601.1,292.8 601.4,289.3 601.4,287.0 C601.5,284.6 601.1,282.2 601.3,279.9 C601.5,277.5 602.4,275.3 602.8,273.0 C603.3,270.6 603.8,267.2 604.0,266.0" fill="none" stroke="#fbfbfb" stroke-width="0.6" opacity="0.8"/>
<path d="M604.0,266.0 C605.7,262.8 611.8,253.3 614.4,246.5 C617.0,239.8 618.3,232.8 619.6,225.7 C620.8,218.6 620.7,211.2 621.8,204.1 C622.8,197.0 625.3,186.5 626.0,183.0" fill="none" stroke="#d6d6d6" stroke-width="1.6" opacity="0.55"/>
<path d="M604.0,266.0 C605.7,262.8 611.8,253.3 614.4,246.5 C617.0,239.8 618.3,232.8 619.6,225.7 C620.8,218.6 620.7,211.2 621.8,204.1 C622.8,197.0 625.3,186.5 626.0,183.0" fill="none" stroke="#fbfbfb" stroke-width="0.6" opacity="0.8"/>
<path d="M601.0,294.0 C604.4,297.7 614.2,309.1 621.3,316.2 C628.3,323.4 635.7,330.2 643.2,336.9 C650.7,343.7 659.7,349.1 666.1,356.8 C672.6,364.4 679.4,378.6 682.0,383.0" fill="none" stroke="#d6d6d6" stroke-width="1.6" opacity="0.55"/>
<path d="M601.0,294.0 C604.4,297.7 614.2,309.1 621.3,316.2 C628.3,323.4 635.7,330.2 643.2,336.9 C650.7,343.7 659.7,349.1 666.1,356.8 C672.6,364.4 679.4,378.6 682.0,383.0" fill="none" stroke="#fbfbfb" stroke-width="0.6" opacity="0.8"/>
<path d="M398.0,246.0 C394.3,243.4 382.1,236.7 375.8,230.2 C369.4,223.8 365.8,214.2 359.9,207.3 C354.0,200.3 347.6,194.0 340.4,188.4 C333.3,182.9 320.9,176.4 317.0,174.0" fill="none" stroke="#d6d6d6" stroke-width="1.6" opacity="0.55"/>
<path d="M398.0,246.0 C394.3,243.4 382.1,236.7 375.8,230.2 C369.4,223.8 365.8,214.2 359.9,207.3 C354.0,200.3 347.6,194.0 340.4,188.4 C333.3,182.9 320.9,176.4 317.0,174.0" fill="none" stroke="#fbfbfb" stroke-width="0.6" opacity="0.8"/>
<path d="M398.0,246.0 C393.3,246.5 379.4,249.2 370.1,248.9 C360.7,248.6 351.2,244.7 341.9,244.2 C332.5,243.6 323.2,244.3 313.9,245.3 C304.6,246.3 290.6,249.2 286.0,250.0" fill="none" stroke="#d6d6d6" stroke-width="1.6" opacity="0.55"/>
<path d="M398.0,246.0 C393.3,246.5 379.4,249.2 370.1,248.9 C360.7,248.6 351.2,244.7 341.9,244.2 C332.5,243.6 323.2,244.3 313.9,245.3 C304.6,246.3 290.6,249.2 286.0,250.0" fill="none" stroke="#fbfbfb" stroke-width="0.6" opacity="0.8"/>
<path d="M821.0,439.0 C824.8,437.4 836.3,433.1 843.6,429.5 C850.9,426.0 857.7,421.4 864.9,417.7 C872.1,414.0 879.9,411.3 886.9,407.2 C893.9,403.1 903.7,395.4 907.0,393.0" fill="none" stroke="#d6d6d6" stroke-width="1.6" opacity="0.55"/>
<path d="M821.0,439.0 C824.8,437.4 836.3,433.1 843.6,429.5 C850.9,426.0 857.7,421.4 864.9,417.7 C872.1,414.0 879.9,411.3 886.9,407.2 C893.9,403.1 903.7,395.4 907.0,393.0" fill="none" stroke="#fbfbfb" stroke-width="0.6" opacity="0.8"/>
<path d="M798.0,346.0 C802.7,347.7 817.1,351.6 826.0,356.0 C834.9,360.3 842.2,368.4 851.3,372.2 C860.5,375.9 871.7,374.9 881.0,378.4 C890.3,381.9 902.7,390.6 907.0,393.0" fill="none" stroke="#d6d6d6" stroke-width="1.6" opacity="0.55"/>
<path d="M798.0,346.0 C802.7,347.7 817.1,351.6 826.0,356.0 C834.9,360.3 842.2,368.4 851.3,372.2 C860.5,375.9 871.7,374.9 881.0,378.4 C890.3,381.9 902.7,390.6 907.0,393.0" fill="none" stroke="#fbfbfb" stroke-width="0.6" opacity="0.8"/>
<path d="M821.0,661.0 C819.8,655.8 815.3,640.2 813.5,629.5 C811.8,618.9 812.5,607.7 810.6,597.1 C808.7,586.4 805.2,576.2 802.1,565.8 C799.0,555.5 793.7,540.1 792.0,535.0" fill="none" stroke="#d6d6d6" stroke-width="1.6" opacity="0.55"/>
<path d="M821.0,661.0 C819.8,655.8 815.3,640.2 813.5,629.5 C811.8,618.9 812.5,607.7 810.6,597.1 C808.7,586.4 805.2,576.2 802.1,565.8 C799.0,555.5 793.7,540.1 792.0,535.0" fill="none" stroke="#fbfbfb" stroke-width="0.6" opacity="0.8"/>
<path d="M333.0,547.0 C335.5,553.3 345.5,571.4 347.8,584.7 C350.1,598.0 344.1,613.6 346.7,626.9 C349.3,640.1 358.2,651.5 363.2,664.0 C368.3,676.6 374.7,695.7 377.0,702.0" fill="none" stroke="#d6d6d6" stroke-width="1.6" opacity="0.55"/>
<path d="M333.0,547.0 C335.5,553.3 345.5,571.4 347.8,584.7 C350.1,598.0 344.1,613.6 346.7,626.9 C349.3,640.1 358.2,651.5 363.2,664.0 C368.3,676.6 374.7,695.7 377.0,702.0" fill="none" stroke="#fbfbfb" stroke-width="0.6" opacity="0.8"/>
<path d="M327.0,485.0 C327.1,487.6 326.8,495.5 327.9,500.6 C329.0,505.7 333.1,510.5 333.6,515.6 C334.2,520.8 331.3,526.3 331.2,531.5 C331.0,536.8 332.7,544.4 333.0,547.0" fill="none" stroke="#d6d6d6" stroke-width="1.6" opacity="0.55"/>
<path d="M327.0,485.0 C327.1,487.6 326.8,495.5 327.9,500.6 C329.0,505.7 333.1,510.5 333.6,515.6 C334.2,520.8 331.3,526.3 331.2,531.5 C331.0,536.8 332.7,544.4 333.0,547.0" fill="none" stroke="#fbfbfb" stroke-width="0.6" opacity="0.8"/>
<path d="M600.0,540.0 C606.2,538.4 624.3,531.7 636.9,530.5 C649.5,529.4 662.8,534.1 675.4,533.1 C688.0,532.1 700.0,526.5 712.4,524.3 C724.8,522.2 743.7,520.7 750.0,520.0" fill="none" stroke="#d6d6d6" stroke-width="1.6" opacity="0.55"/>
<path d="M600.0,540.0 C606.2,538.4 624.3,531.7 636.9,530.5 C649.5,529.4 662.8,534.1 675.4,533.1 C688.0,532.1 700.0,526.5 712.4,524.3 C724.8,522.2 743.7,520.7 750.0,520.0" fill="none" stroke="#fbfbfb" stroke-width="0.6" opacity="0.8"/>
<path d="M540.0,650.0 C541.3,655.7 543.8,673.4 547.6,684.4 C551.3,695.4 558.5,705.1 562.7,715.9 C566.9,726.7 568.3,738.6 572.9,749.3 C577.4,760.0 587.1,774.9 590.0,780.0" fill="none" stroke="#d6d6d6" stroke-width="1.6" opacity="0.55"/>
<path d="M540.0,650.0 C541.3,655.7 543.8,673.4 547.6,684.4 C551.3,695.4 558.5,705.1 562.7,715.9 C566.9,726.7 568.3,738.6 572.9,749.3 C577.4,760.0 587.1,774.9 590.0,780.0" fill="none" stroke="#fbfbfb" stroke-width="0.6" opacity="0.8"/>
<path d="M335.0,532.0 L360.0,536.0 L380.0,530.0 L405.0,535.0 L430.0,534.0 L455.0,526.0 L480.0,514.0 L500.0,500.0 L520.0,495.0 L545.0,480.0 L560.0,470.0" fill="none" stroke="#a9d8ef" stroke-width="1.1" stroke-linejoin="round"/>
<path d="M460.0,410.0 L490.0,425.0 L510.0,437.0 L530.0,452.0 L555.0,452.0 L575.0,447.0 L600.0,440.0" fill="none" stroke="#a9d8ef" stroke-width="1.1" stroke-linejoin="round"/>
<path d="M362.0,690.0 L380.0,702.0 L400.0,716.0 L425.0,735.0 L450.0,755.0 L468.0,778.0" fill="none" stroke="#a9d8ef" stroke-width="1.1" stroke-linejoin="round"/>
<path d="M352.0,652.0 L362.0,690.0" fill="none" stroke="#a9d8ef" stroke-width="1.1" stroke-linejoin="round"/>
<path d="M622.0,600.0 L621.0,650.0 L618.0,700.0 L613.0,750.0 L612.0,790.0" fill="none" stroke="#a9d8ef" stroke-width="1.1" stroke-linejoin="round"/>
<path d="M622.0,650.0 L650.0,640.0 L680.0,614.0" fill="none" stroke="#a9d8ef" stroke-width="1.1" stroke-linejoin="round"/>
<path d="M607.0,216.0 L640.0,210.0 L690.0,230.0 L715.0,268.0 L722.0,300.0 L760.0,340.0 L785.0,380.0 L778.0,426.0 L769.0,441.0 L757.0,465.0 L752.0,500.0 L749.0,521.0" fill="none" stroke="#a9d8ef" stroke-width="1.1" stroke-linejoin="round"/>
<path d="M749.0,521.0 L800.0,512.0" fill="none" stroke="#a9d8ef" stroke-width="1.1" stroke-linejoin="round"/>
<path d="M754.0,687.0 L790.0,683.0 L840.0,676.0 L880.0,685.0 L935.0,690.0" fill="none" stroke="#a9d8ef" stroke-width="1.1" stroke-linejoin="round"/>
<path d="M626.0,290.0 L640.0,305.0 L660.0,330.0 L680.0,360.0 L690.0,390.0" fill="none" stroke="#a9d8ef" stroke-width="1.1" stroke-linejoin="round"/>
<path d="M756.0,450.0 L740.0,430.0 L700.0,410.0 L690.0,395.0" fill="none" stroke="#a9d8ef" stroke-width="1.1" stroke-linejoin="round"/>
<path d="M770.0,520.0 L790.0,470.0 L810.0,430.0 L830.0,400.0" fill="none" stroke="#a9d8ef" stroke-width="1.1" stroke-linejoin="round"/>
<path d="M209.0,815.0 L240.0,825.0 L270.0,835.0 L300.0,846.0" fill="none" stroke="#a9d8ef" stroke-width="1.1" stroke-linejoin="round"/>
<path d="M520.6,277.9 L523.0,291.0 L532.4,302.7 L541.9,305.0 L553.7,314.5 L570.0,321.6 L591.3,331.6 L594.8,352.8 L612.6,356.4 L626.8,367.0 L637.4,360.0 L655.1,374.1 L658.7,384.8 L676.4,388.3 L704.8,402.5 L722.5,416.7 L742.4,411.5 L769.7,423.5 L778.0,426.4 L774.7,431.4 L769.7,441.3 L759.8,451.2 L757.3,465.0 L752.0,490.0 L749.0,521.6" fill="none" stroke="#fff" stroke-width="3" opacity="0.6" stroke-linejoin="round"/>
<path d="M520.6,277.9 L523.0,291.0 L532.4,302.7 L541.9,305.0 L553.7,314.5 L570.0,321.6 L591.3,331.6 L594.8,352.8 L612.6,356.4 L626.8,367.0 L637.4,360.0 L655.1,374.1 L658.7,384.8 L676.4,388.3 L704.8,402.5 L722.5,416.7 L742.4,411.5 L769.7,423.5 L778.0,426.4 L774.7,431.4 L769.7,441.3 L759.8,451.2 L757.3,465.0 L752.0,490.0 L749.0,521.6" fill="none" stroke="#b7a3cb" stroke-width="1.4" stroke-linejoin="round"/>
<path d="M557.2,257.8 L565.5,264.9 L579.7,267.2 L596.3,257.8 L608.0,248.3 L627.0,248.3 L640.0,253.0 L665.8,274.8" fill="none" stroke="#fff" stroke-width="3" opacity="0.6" stroke-linejoin="round"/>
<path d="M557.2,257.8 L565.5,264.9 L579.7,267.2 L596.3,257.8 L608.0,248.3 L627.0,248.3 L640.0,253.0 L665.8,274.8" fill="none" stroke="#b7a3cb" stroke-width="1.4" stroke-linejoin="round"/>
<path d="M665.8,274.8 L676.4,232.2 L687.0,211.0 L719.0,196.8 L726.0,186.0 L711.9,168.4 L719.0,150.6 L716.0,140.0" fill="none" stroke="#fff" stroke-width="3" opacity="0.6" stroke-linejoin="round"/>
<path d="M665.8,274.8 L676.4,232.2 L687.0,211.0 L719.0,196.8 L726.0,186.0 L711.9,168.4 L719.0,150.6 L716.0,140.0" fill="none" stroke="#b7a3cb" stroke-width="1.4" stroke-linejoin="round"/>
<path d="M665.8,274.8 L669.3,289.0 L676.4,296.0 L687.0,306.7 L690.6,338.7 L676.4,345.7 L672.9,359.9 L690.0,372.0 L700.0,395.0 L704.8,402.5" fill="none" stroke="#fff" stroke-width="3" opacity="0.6" stroke-linejoin="round"/>
<path d="M665.8,274.8 L669.3,289.0 L676.4,296.0 L687.0,306.7 L690.6,338.7 L676.4,345.7 L672.9,359.9 L690.0,372.0 L700.0,395.0 L704.8,402.5" fill="none" stroke="#b7a3cb" stroke-width="1.4" stroke-linejoin="round"/>
<path d="M658.7,367.0 L672.9,359.9" fill="none" stroke="#fff" stroke-width="3" opacity="0.6" stroke-linejoin="round"/>
<path d="M658.7,367.0 L672.9,359.9" fill="none" stroke="#b7a3cb" stroke-width="1.4" stroke-linejoin="round"/>
<path d="M749.0,521.6 L775.0,519.0 L793.4,511.0 L806.4,513.8 L842.9,524.2 L848.0,521.6 L863.7,532.0 L879.3,524.2 L900.0,526.8 L935.0,524.2" fill="none" stroke="#fff" stroke-width="3" opacity="0.6" stroke-linejoin="round"/>
<path d="M749.0,521.6 L775.0,519.0 L793.4,511.0 L806.4,513.8 L842.9,524.2 L848.0,521.6 L863.7,532.0 L879.3,524.2 L900.0,526.8 L935.0,524.2" fill="none" stroke="#b7a3cb" stroke-width="1.4" stroke-linejoin="round"/>
<path d="M842.9,524.2 L837.7,552.8 L842.9,565.8 L863.7,568.4 L879.3,560.6 L935.0,558.0" fill="none" stroke="#fff" stroke-width="3" opacity="0.6" stroke-linejoin="round"/>
<path d="M842.9,524.2 L837.7,552.8 L842.9,565.8 L863.7,568.4 L879.3,560.6 L935.0,558.0" fill="none" stroke="#b7a3cb" stroke-width="1.4" stroke-linejoin="round"/>
<path d="M749.0,521.6 L725.8,526.8 L718.0,532.0 L699.8,565.8 L684.2,597.0 L676.4,615.2 L689.4,612.6 L689.4,597.0 L712.8,599.6" fill="none" stroke="#fff" stroke-width="3" opacity="0.6" stroke-linejoin="round"/>
<path d="M749.0,521.6 L725.8,526.8 L718.0,532.0 L699.8,565.8 L684.2,597.0 L676.4,615.2 L689.4,612.6 L689.4,597.0 L712.8,599.6" fill="none" stroke="#b7a3cb" stroke-width="1.4" stroke-linejoin="round"/>
<path d="M712.8,599.6 L723.2,630.8 L749.2,636.0 L775.2,615.2 L788.2,597.0 L806.4,628.2 L811.6,636.0 L827.3,594.4 L863.7,604.8 L863.7,578.8 L879.3,589.2 L935.0,563.2" fill="none" stroke="#fff" stroke-width="3" opacity="0.6" stroke-linejoin="round"/>
<path d="M712.8,599.6 L723.2,630.8 L749.2,636.0 L775.2,615.2 L788.2,597.0 L806.4,628.2 L811.6,636.0 L827.3,594.4 L863.7,604.8 L863.7,578.8 L879.3,589.2 L935.0,563.2" fill="none" stroke="#b7a3cb" stroke-width="1.4" stroke-linejoin="round"/>
<path d="M712.8,599.6 L715.4,636.0 L725.8,662.0 L718.0,688.0 L707.0,685.3 L712.0,695.5 L724.7,708.0 L722.2,723.4 L724.7,736.0 L737.4,748.7 L752.6,748.7 L747.5,766.4 L742.5,772.8" fill="none" stroke="#fff" stroke-width="3" opacity="0.6" stroke-linejoin="round"/>
<path d="M712.8,599.6 L715.4,636.0 L725.8,662.0 L718.0,688.0 L707.0,685.3 L712.0,695.5 L724.7,708.0 L722.2,723.4 L724.7,736.0 L737.4,748.7 L752.6,748.7 L747.5,766.4 L742.5,772.8" fill="none" stroke="#b7a3cb" stroke-width="1.4" stroke-linejoin="round"/>
<path d="M263.4,140.0 L268.0,168.0 L258.7,184.5 L268.0,203.4 L280.0,217.6 L282.3,227.0 L284.0,240.0" fill="none" stroke="#fff" stroke-width="3" opacity="0.6" stroke-linejoin="round"/>
<path d="M263.4,140.0 L268.0,168.0 L258.7,184.5 L268.0,203.4 L280.0,217.6 L282.3,227.0 L284.0,240.0" fill="none" stroke="#b7a3cb" stroke-width="1.4" stroke-linejoin="round"/>
<path d="M321.2,796.9 L342.9,815.0 L361.0,825.8 L389.9,829.4 L411.6,840.3 L430.0,850.0" fill="none" stroke="#fff" stroke-width="3" opacity="0.6" stroke-linejoin="round"/>
<path d="M321.2,796.9 L342.9,815.0 L361.0,825.8 L389.9,829.4 L411.6,840.3 L430.0,850.0" fill="none" stroke="#b7a3cb" stroke-width="1.4" stroke-linejoin="round"/>
<ellipse cx="680" cy="614" rx="10" ry="3.5" transform="rotate(-20 680 614)" fill="#dff4fc" stroke="#b9dff0" stroke-width="0.6"/>
<ellipse cx="801" cy="511" rx="6" ry="2.5" transform="rotate(-25 801 511)" fill="#dff4fc" stroke="#b9dff0" stroke-width="0.6"/>
<circle cx="317.3" cy="174.3" r="2.6" fill="#fff" stroke="#555" stroke-width="1"/><text x="322.5" y="174.3" font-size="12.5" letter-spacing="0.6" fill="#262626" font-weight="normal" font-style="normal" text-anchor="start" stroke="#fff" stroke-width="2.2" stroke-opacity="0.85" paint-order="stroke" stroke-linejoin="round">Birmingham</text>
<circle cx="259.4" cy="248.3" r="2.6" fill="#fff" stroke="#555" stroke-width="1"/><text x="219.6" y="243" font-size="12.5" letter-spacing="0.52" fill="#262626" font-weight="normal" font-style="normal" text-anchor="start" stroke="#fff" stroke-width="2.2" stroke-opacity="0.85" paint-order="stroke" stroke-linejoin="round">Cardiff</text>
<circle cx="286.3" cy="250.2" r="2.6" fill="#fff" stroke="#555" stroke-width="1"/><text x="292.5" y="250.2" font-size="12" letter-spacing="0.12" fill="#262626" font-weight="normal" font-style="normal" text-anchor="start" stroke="#fff" stroke-width="2.2" stroke-opacity="0.85" paint-order="stroke" stroke-linejoin="round">Bristol</text>
<circle cx="398.2" cy="246.4" r="2.6" fill="#fff" stroke="#555" stroke-width="1"/><text x="353.2" y="241.2" font-size="12.5" letter-spacing="0.53" fill="#262626" font-weight="normal" font-style="normal" text-anchor="start" stroke="#fff" stroke-width="2.2" stroke-opacity="0.85" paint-order="stroke" stroke-linejoin="round">London</text>
<circle cx="307.4" cy="411.2" r="2.6" fill="#fff" stroke="#555" stroke-width="1"/><text x="308" y="406" font-size="12" letter-spacing="-0.12" fill="#262626" font-weight="normal" font-style="normal" text-anchor="start" stroke="#fff" stroke-width="2.2" stroke-opacity="0.85" paint-order="stroke" stroke-linejoin="round">St Helier</text>
<circle cx="600.5" cy="203.9" r="2.6" fill="#fff" stroke="#555" stroke-width="1"/><text x="540.7" y="198.2" font-size="12" letter-spacing="0.05" fill="#262626" font-weight="normal" font-style="normal" text-anchor="start" stroke="#fff" stroke-width="2.2" stroke-opacity="0.85" paint-order="stroke" stroke-linejoin="round">The Hague</text>
<circle cx="607.6" cy="215.7" r="2.6" fill="#fff" stroke="#555" stroke-width="1"/><text x="598.4" y="230.5" font-size="12" letter-spacing="0.0" fill="#262626" font-weight="normal" font-style="normal" text-anchor="start" stroke="#fff" stroke-width="2.2" stroke-opacity="0.85" paint-order="stroke" stroke-linejoin="round">Rotterdam</text>
<circle cx="626" cy="182.6" r="2.6" fill="#fff" stroke="#555" stroke-width="1"/><text x="629.6" y="177.2" font-size="12.5" letter-spacing="0.52" fill="#262626" font-weight="normal" font-style="normal" text-anchor="start" stroke="#fff" stroke-width="2.2" stroke-opacity="0.85" paint-order="stroke" stroke-linejoin="round">Amsterdam</text>
<circle cx="847.4" cy="182.6" r="2.6" fill="#fff" stroke="#555" stroke-width="1"/><text x="847.4" y="176.5" font-size="12" letter-spacing="0.0" fill="#262626" font-weight="normal" font-style="normal" text-anchor="start" stroke="#fff" stroke-width="2.2" stroke-opacity="0.85" paint-order="stroke" stroke-linejoin="round">Hanover</text>
<circle cx="792.4" cy="208.5" r="2.6" fill="#fff" stroke="#555" stroke-width="1"/><text x="797" y="204.6" font-size="12" letter-spacing="0.15" fill="#262626" font-weight="normal" font-style="normal" text-anchor="start" stroke="#fff" stroke-width="2.2" stroke-opacity="0.85" paint-order="stroke" stroke-linejoin="round">Bielefeld</text>
<circle cx="723.2" cy="250" r="2.6" fill="#fff" stroke="#555" stroke-width="1"/><text x="692.4" y="244.6" font-size="12" letter-spacing="0.05" fill="#262626" font-weight="normal" font-style="normal" text-anchor="start" stroke="#fff" stroke-width="2.2" stroke-opacity="0.85" paint-order="stroke" stroke-linejoin="round">Essen</text>
<circle cx="743.1" cy="245.4" r="2.6" fill="#fff" stroke="#555" stroke-width="1"/><text x="743.8" y="240.4" font-size="12" letter-spacing="-0.03" fill="#262626" font-weight="normal" font-style="normal" text-anchor="start" stroke="#fff" stroke-width="2.2" stroke-opacity="0.85" paint-order="stroke" stroke-linejoin="round">Dortmund</text>
<circle cx="712.6" cy="267" r="2.6" fill="#fff" stroke="#555" stroke-width="1"/><text x="718.3" y="266" font-size="12" letter-spacing="0.09" fill="#262626" font-weight="normal" font-style="normal" text-anchor="start" stroke="#fff" stroke-width="2.2" stroke-opacity="0.85" paint-order="stroke" stroke-linejoin="round">Dusseldorf</text>
<circle cx="720.4" cy="287.2" r="2.6" fill="#fff" stroke="#555" stroke-width="1"/><text x="726" y="288" font-size="12" letter-spacing="0.13" fill="#262626" font-weight="normal" font-style="normal" text-anchor="start" stroke="#fff" stroke-width="2.2" stroke-opacity="0.85" paint-order="stroke" stroke-linejoin="round">Cologne</text>
<circle cx="604.4" cy="266" r="2.6" fill="#fff" stroke="#555" stroke-width="1"/><text x="610" y="275.5" font-size="12" letter-spacing="0.07" fill="#262626" font-weight="normal" font-style="normal" text-anchor="start" stroke="#fff" stroke-width="2.2" stroke-opacity="0.85" paint-order="stroke" stroke-linejoin="round">Antwerp</text>
<circle cx="601.5" cy="293.7" r="2.6" fill="#fff" stroke="#555" stroke-width="1"/><text x="546.6" y="290.2" font-size="12.5" letter-spacing="0.53" fill="#262626" font-weight="normal" font-style="normal" text-anchor="start" stroke="#fff" stroke-width="2.2" stroke-opacity="0.85" paint-order="stroke" stroke-linejoin="round">Brussels</text>
<circle cx="543.5" cy="309.8" r="2.6" fill="#fff" stroke="#555" stroke-width="1"/><text x="519.4" y="321.1" font-size="12" letter-spacing="0.17" fill="#262626" font-weight="normal" font-style="normal" text-anchor="start" stroke="#fff" stroke-width="2.2" stroke-opacity="0.85" paint-order="stroke" stroke-linejoin="round">Lille</text>
<circle cx="544.2" cy="328.2" r="2.6" fill="#fff" stroke="#555" stroke-width="1"/><text x="514.7" y="341.7" font-size="12" letter-spacing="-0.47" fill="#262626" font-weight="normal" font-style="normal" text-anchor="start" stroke="#fff" stroke-width="2.2" stroke-opacity="0.85" paint-order="stroke" stroke-linejoin="round">Douai</text>
<circle cx="798.8" cy="346.5" r="2.6" fill="#fff" stroke="#555" stroke-width="1"/><text x="799.9" y="330.5" font-size="12" letter-spacing="0.08" fill="#262626" font-weight="normal" font-style="normal" text-anchor="start" stroke="#fff" stroke-width="2.2" stroke-opacity="0.85" paint-order="stroke" stroke-linejoin="round">Frankfurt</text>
<text x="799.9" y="341" font-size="12" letter-spacing="0.13" fill="#262626" font-weight="normal" font-style="normal" text-anchor="start" stroke="#fff" stroke-width="2.2" stroke-opacity="0.85" paint-order="stroke" stroke-linejoin="round">am Main</text>
<circle cx="682.5" cy="383" r="2.6" fill="#fff" stroke="#555" stroke-width="1"/><text x="688" y="387.3" font-size="12.5" letter-spacing="0.77" fill="#262626" font-weight="normal" font-style="normal" text-anchor="start" stroke="#fff" stroke-width="2.2" stroke-opacity="0.85" paint-order="stroke" stroke-linejoin="round">Luxembourg</text>
<circle cx="789.2" cy="390.8" r="2.6" fill="#fff" stroke="#555" stroke-width="1"/><text x="795.3" y="388.3" font-size="12" letter-spacing="-0.16" fill="#262626" font-weight="normal" font-style="normal" text-anchor="start" stroke="#fff" stroke-width="2.2" stroke-opacity="0.85" paint-order="stroke" stroke-linejoin="round">Mannheim</text>
<circle cx="907" cy="392.6" r="2.6" fill="#fff" stroke="#555" stroke-width="1"/><text x="893.5" y="388.3" font-size="12" letter-spacing="-0.75" fill="#262626" font-weight="normal" font-style="normal" text-anchor="start" stroke="#fff" stroke-width="2.2" stroke-opacity="0.85" paint-order="stroke" stroke-linejoin="round">Nurem</text>
<circle cx="722.5" cy="408.5" r="2.6" fill="#fff" stroke="#555" stroke-width="1"/><text x="674" y="423.8" font-size="12" letter-spacing="0.0" fill="#262626" font-weight="normal" font-style="normal" text-anchor="start" stroke="#fff" stroke-width="2.2" stroke-opacity="0.85" paint-order="stroke" stroke-linejoin="round">Saarbrucken</text>
<circle cx="820.8" cy="439" r="2.6" fill="#fff" stroke="#555" stroke-width="1"/><text x="821.2" y="435.5" font-size="12" letter-spacing="0.17" fill="#262626" font-weight="normal" font-style="normal" text-anchor="start" stroke="#fff" stroke-width="2.2" stroke-opacity="0.85" paint-order="stroke" stroke-linejoin="round">Stuttgart</text>
<circle cx="326.8" cy="485.5" r="2.6" fill="#fff" stroke="#555" stroke-width="1"/><text x="326.8" y="480.6" font-size="12" letter-spacing="-0.04" fill="#262626" font-weight="normal" font-style="normal" text-anchor="start" stroke="#fff" stroke-width="2.2" stroke-opacity="0.85" paint-order="stroke" stroke-linejoin="round">Rennes</text>
<circle cx="332.7" cy="546.5" r="2.6" fill="#fff" stroke="#555" stroke-width="1"/><text x="339" y="549.5" font-size="12" letter-spacing="0.0" fill="#262626" font-weight="normal" font-style="normal" text-anchor="start" stroke="#fff" stroke-width="2.2" stroke-opacity="0.85" paint-order="stroke" stroke-linejoin="round">Nantes</text>
<circle cx="377" cy="701.9" r="2.6" fill="#fff" stroke="#555" stroke-width="1"/><text x="339" y="696" font-size="12" letter-spacing="0.06" fill="#262626" font-weight="normal" font-style="normal" text-anchor="start" stroke="#fff" stroke-width="2.2" stroke-opacity="0.85" paint-order="stroke" stroke-linejoin="round">Bordeaux</text>
<circle cx="469.4" cy="780.5" r="2.6" fill="#fff" stroke="#555" stroke-width="1"/><text x="470.4" y="775" font-size="12" letter-spacing="0.17" fill="#262626" font-weight="normal" font-style="normal" text-anchor="start" stroke="#fff" stroke-width="2.2" stroke-opacity="0.85" paint-order="stroke" stroke-linejoin="round">Toulouse</text>
<circle cx="269.8" cy="801.2" r="2.6" fill="#fff" stroke="#555" stroke-width="1"/><text x="236.9" y="796.3" font-size="12" letter-spacing="0.0" fill="#262626" font-weight="normal" font-style="normal" text-anchor="start" stroke="#fff" stroke-width="2.2" stroke-opacity="0.85" paint-order="stroke" stroke-linejoin="round">Bilbao</text>
<circle cx="281" cy="827" r="2.6" fill="#fff" stroke="#555" stroke-width="1"/><text x="288.5" y="827.3" font-size="12" letter-spacing="0.07" fill="#262626" font-weight="normal" font-style="normal" text-anchor="start" stroke="#fff" stroke-width="2.2" stroke-opacity="0.85" paint-order="stroke" stroke-linejoin="round">Vitoria-</text>
<text x="288.5" y="838" font-size="12" letter-spacing="0.02" fill="#262626" font-weight="normal" font-style="normal" text-anchor="start" stroke="#fff" stroke-width="2.2" stroke-opacity="0.85" paint-order="stroke" stroke-linejoin="round">Gasteiz</text>
<text x="512" y="428.4" font-size="12.5" letter-spacing="0.8" fill="#262626" font-weight="normal" font-style="normal" text-anchor="start" stroke="#fff" stroke-width="2.2" stroke-opacity="0.85" paint-order="stroke" stroke-linejoin="round">Paris</text>
<circle cx="742.2" cy="563.9" r="2.6" fill="#fff" stroke="#555" stroke-width="1"/><text x="736.3" y="559" font-size="12.5" letter-spacing="0.25" fill="#262626" font-weight="normal" font-style="normal" text-anchor="start" stroke="#fff" stroke-width="2.2" stroke-opacity="0.85" paint-order="stroke" stroke-linejoin="round">Bern</text>
<circle cx="792.4" cy="534.8" r="2.6" fill="#fff" stroke="#555" stroke-width="1"/><text x="795.4" y="549.6" font-size="12" letter-spacing="0.14" fill="#262626" font-weight="normal" font-style="normal" text-anchor="start" stroke="#fff" stroke-width="2.2" stroke-opacity="0.85" paint-order="stroke" stroke-linejoin="round">Zurich</text>
<circle cx="837.2" cy="551.6" r="2.6" fill="#fff" stroke="#555" stroke-width="1"/><text x="843" y="555.5" font-size="12.5" letter-spacing="0.63" fill="#262626" font-weight="normal" font-style="normal" text-anchor="start" stroke="#fff" stroke-width="2.2" stroke-opacity="0.85" paint-order="stroke" stroke-linejoin="round">Vaduz</text>
<text x="630" y="645" font-size="12" letter-spacing="0.13" fill="#262626" font-weight="normal" font-style="normal" text-anchor="start" stroke="#fff" stroke-width="2.2" stroke-opacity="0.85" paint-order="stroke" stroke-linejoin="round">Lyon</text>
<circle cx="821.5" cy="661.3" r="2.6" fill="#fff" stroke="#555" stroke-width="1"/><text x="826" y="657.9" font-size="12.5" letter-spacing="0.53" fill="#262626" font-weight="normal" font-style="normal" text-anchor="start" stroke="#fff" stroke-width="2.2" stroke-opacity="0.85" paint-order="stroke" stroke-linejoin="round">Milan</text>
<circle cx="754" cy="686.9" r="2.6" fill="#fff" stroke="#555" stroke-width="1"/><text x="756" y="681" font-size="12" letter-spacing="-0.07" fill="#262626" font-weight="normal" font-style="normal" text-anchor="start" stroke="#fff" stroke-width="2.2" stroke-opacity="0.85" paint-order="stroke" stroke-linejoin="round">Turin</text>
<circle cx="810.2" cy="728.7" r="2.6" fill="#fff" stroke="#555" stroke-width="1"/><text x="811" y="724.3" font-size="12" letter-spacing="0.22" fill="#262626" font-weight="normal" font-style="normal" text-anchor="start" stroke="#fff" stroke-width="2.2" stroke-opacity="0.85" paint-order="stroke" stroke-linejoin="round">Genoa</text>
<circle cx="920.4" cy="723.8" r="2.6" fill="#fff" stroke="#555" stroke-width="1"/><text x="920.4" y="718" font-size="12" letter-spacing="0.5" fill="#262626" font-weight="normal" font-style="normal" text-anchor="start" stroke="#fff" stroke-width="2.2" stroke-opacity="0.85" paint-order="stroke" stroke-linejoin="round">B</text>
<circle cx="741.3" cy="772" r="2.6" fill="#fff" stroke="#555" stroke-width="1"/><text x="727.5" y="787.8" font-size="12.5" letter-spacing="0.64" fill="#262626" font-weight="normal" font-style="normal" text-anchor="start" stroke="#fff" stroke-width="2.2" stroke-opacity="0.85" paint-order="stroke" stroke-linejoin="round">Monaco</text>
<circle cx="916" cy="769.6" r="2.6" fill="#fff" stroke="#555" stroke-width="1"/><text x="872.7" y="781.9" font-size="12" letter-spacing="0.21" fill="#262626" font-weight="normal" font-style="normal" text-anchor="start" stroke="#fff" stroke-width="2.2" stroke-opacity="0.85" paint-order="stroke" stroke-linejoin="round">Florence</text>
<circle cx="647.8" cy="799" r="2.6" fill="#fff" stroke="#555" stroke-width="1"/><text x="648.7" y="794.2" font-size="12" letter-spacing="0.29" fill="#262626" font-weight="normal" font-style="normal" text-anchor="start" stroke="#fff" stroke-width="2.2" stroke-opacity="0.85" paint-order="stroke" stroke-linejoin="round">Marseille</text>
<text x="909.6" y="478.5" font-size="12" letter-spacing="0.2" fill="#262626" font-weight="normal" font-style="normal" text-anchor="start" stroke="#fff" stroke-width="2.2" stroke-opacity="0.85" paint-order="stroke" stroke-linejoin="round">Mu</text>
<text x="295" y="154.5" font-size="11" letter-spacing="1.6" fill="#8a7f98" font-weight="normal" font-style="normal" text-anchor="start" stroke="#fff" stroke-width="2.2" stroke-opacity="0.85" paint-order="stroke" stroke-linejoin="round">ENGLAND</text>
<text x="214" y="201" font-size="11" letter-spacing="1.6" fill="#8a7f98" font-weight="normal" font-style="normal" text-anchor="start" stroke="#fff" stroke-width="2.2" stroke-opacity="0.85" paint-order="stroke" stroke-linejoin="round">W</text>
<text x="409.5" y="192" font-size="11" letter-spacing="1.6" fill="#8a7f98" font-weight="normal" font-style="normal" text-anchor="start" stroke="#fff" stroke-width="2.2" stroke-opacity="0.85" paint-order="stroke" stroke-linejoin="round">ENGLAND</text>
<text x="605.5" y="152.5" font-size="11" letter-spacing="1.2" fill="#4a4a4a" font-weight="bold" font-style="normal" text-anchor="start" font-family="Liberation Serif" stroke="#fff" stroke-width="2.2" stroke-opacity="0.85" paint-order="stroke" stroke-linejoin="round">NETHERLANDS</text>
<text x="817.2" y="252.8" font-size="14" letter-spacing="2.3" fill="#4a4a4a" font-weight="bold" font-style="normal" text-anchor="start" font-family="Liberation Serif" stroke="#fff" stroke-width="2.2" stroke-opacity="0.85" paint-order="stroke" stroke-linejoin="round">GERMANY</text>
<text x="597.3" y="327.3" font-size="12" letter-spacing="0.9" fill="#4a4a4a" font-weight="bold" font-style="normal" text-anchor="start" font-family="Liberation Serif" stroke="#fff" stroke-width="2.2" stroke-opacity="0.85" paint-order="stroke" stroke-linejoin="round">BELGIUM</text>
<text x="645.2" y="372.4" font-size="10" letter-spacing="0.3" fill="#4a4a4a" font-weight="bold" font-style="normal" text-anchor="start" font-family="Liberation Serif" stroke="#fff" stroke-width="2.2" stroke-opacity="0.85" paint-order="stroke" stroke-linejoin="round">LUXEMBOURG</text>
<text x="468" y="581" font-size="16" letter-spacing="5.2" fill="#333" font-weight="bold" font-style="normal" text-anchor="start" font-family="Liberation Serif" stroke="#fff" stroke-width="2.2" stroke-opacity="0.85" paint-order="stroke" stroke-linejoin="round">FRANCE</text>
<text x="728.5" y="579.1" font-size="12" letter-spacing="0.5" fill="#4a4a4a" font-weight="bold" font-style="normal" text-anchor="start" font-family="Liberation Serif" stroke="#fff" stroke-width="2.2" stroke-opacity="0.85" paint-order="stroke" stroke-linejoin="round">SWITZERLAND</text>
<text x="524.5" y="538" font-size="11" letter-spacing="0.6" fill="#6e6e6e" font-weight="normal" font-style="italic" text-anchor="start" stroke="#fff" stroke-width="2.2" stroke-opacity="0.85" paint-order="stroke" stroke-linejoin="round">PLATEAU DE LANGRES</text>
<text x="508.3" y="702" font-size="11" letter-spacing="1.0" fill="#6e6e6e" font-weight="normal" font-style="italic" text-anchor="start" stroke="#fff" stroke-width="2.2" stroke-opacity="0.85" paint-order="stroke" stroke-linejoin="round">CENTRAL</text>
<text x="514.7" y="716" font-size="11" letter-spacing="1.0" fill="#6e6e6e" font-weight="normal" font-style="italic" text-anchor="start" stroke="#fff" stroke-width="2.2" stroke-opacity="0.85" paint-order="stroke" stroke-linejoin="round">MASSIF</text>
<text x="352.4" y="752" font-size="11" letter-spacing="1.2" fill="#6e6e6e" font-weight="normal" font-style="italic" text-anchor="start" stroke="#fff" stroke-width="2.2" stroke-opacity="0.85" paint-order="stroke" stroke-linejoin="round">BASSIN</text>
<text x="345.5" y="766" font-size="11" letter-spacing="1.0" fill="#6e6e6e" font-weight="normal" font-style="italic" text-anchor="start" stroke="#fff" stroke-width="2.2" stroke-opacity="0.85" paint-order="stroke" stroke-linejoin="round">AQUITAIN</text>
<text x="699" y="746.5" font-size="11" letter-spacing="0.9" fill="#6e6e6e" font-weight="normal" font-style="italic" text-anchor="start" stroke="#fff" stroke-width="2.2" stroke-opacity="0.85" paint-order="stroke" stroke-linejoin="round">MARITIME</text>
<text x="716.7" y="760.5" font-size="11" letter-spacing="1.2" fill="#6e6e6e" font-weight="normal" font-style="italic" text-anchor="start" stroke="#fff" stroke-width="2.2" stroke-opacity="0.85" paint-order="stroke" stroke-linejoin="round">ALPS</text>
<text x="662" y="632" font-size="11" letter-spacing="0" fill="#6e6e6e" font-weight="normal" font-style="italic" text-anchor="start" textLength="128" lengthAdjust="spacing" transform="rotate(-48.4 662 632)" stroke="#fff" stroke-width="2.2" stroke-opacity="0.85" paint-order="stroke" stroke-linejoin="round">JURA MOUNTAINS</text>
<text x="826" y="611" font-size="15" letter-spacing="0" fill="#666" font-weight="normal" font-style="italic" text-anchor="start" textLength="76" lengthAdjust="spacing" transform="rotate(-23 826 611)" stroke="#fff" stroke-width="2.2" stroke-opacity="0.85" paint-order="stroke" stroke-linejoin="round">ALPS</text>
<text x="349" y="808" font-size="12" letter-spacing="0" fill="#6e6e6e" font-weight="normal" font-style="italic" text-anchor="start" textLength="124" lengthAdjust="spacing" transform="rotate(17.8 349 808)" stroke="#fff" stroke-width="2.2" stroke-opacity="0.85" paint-order="stroke" stroke-linejoin="round">PYRENEES</text>
<text x="576" y="738" font-size="11" letter-spacing="0" fill="#6e6e6e" font-weight="normal" font-style="italic" text-anchor="start" textLength="108" lengthAdjust="spacing" transform="rotate(-73 576 738)" stroke="#fff" stroke-width="2.2" stroke-opacity="0.85" paint-order="stroke" stroke-linejoin="round">CEVENNES</text>
<text x="890" y="740" font-size="11" letter-spacing="0" fill="#6e6e6e" font-weight="normal" font-style="italic" text-anchor="start" textLength="40" lengthAdjust="spacing" transform="rotate(35 890 740)" stroke="#fff" stroke-width="2.2" stroke-opacity="0.85" paint-order="stroke" stroke-linejoin="round">APE</text>
<text x="416.6" y="327.5" font-size="11.5" letter-spacing="0.8" fill="#6597b8" font-weight="normal" font-style="italic" text-anchor="start">English</text>
<text x="414.5" y="340" font-size="11.5" letter-spacing="0.8" fill="#6597b8" font-weight="normal" font-style="italic" text-anchor="start">Channel</text>
<text x="247" y="368" font-size="11.5" letter-spacing="0.8" fill="#6597b8" font-weight="normal" font-style="italic" text-anchor="start">English</text>
<text x="246" y="381" font-size="11.5" letter-spacing="0.8" fill="#6597b8" font-weight="normal" font-style="italic" text-anchor="start">Channel</text>
<text x="195" y="668" font-size="11.5" letter-spacing="1.0" fill="#6597b8" font-weight="normal" font-style="italic" text-anchor="start">Bay of</text>
<text x="193" y="680" font-size="11.5" letter-spacing="1.0" fill="#6597b8" font-weight="normal" font-style="italic" text-anchor="start">Biscay</text>
<text x="574" y="824.5" font-size="11.5" letter-spacing="0.6" fill="#6597b8" font-weight="normal" font-style="italic" text-anchor="start">Gulf of</text>
<text x="580.8" y="836.5" font-size="11.5" letter-spacing="0.6" fill="#6597b8" font-weight="normal" font-style="italic" text-anchor="start">Lion</text>
<text x="805.2" y="771.5" font-size="11.5" letter-spacing="0.6" fill="#6597b8" font-weight="normal" font-style="italic" text-anchor="start">Ligurian</text>
<text x="818.5" y="784.5" font-size="11.5" letter-spacing="0.6" fill="#6597b8" font-weight="normal" font-style="italic" text-anchor="start">Sea</text>
<text x="350" y="532" font-size="10" letter-spacing="0.5" fill="#6597b8" font-weight="normal" font-style="italic" text-anchor="start" stroke="#fff" stroke-width="2.2" stroke-opacity="0.85" paint-order="stroke" stroke-linejoin="round">Loire</text>
<text x="427.6" y="529" font-size="10" letter-spacing="0.5" fill="#6597b8" font-weight="normal" font-style="italic" text-anchor="start" transform="rotate(-10 427.6 529)" stroke="#fff" stroke-width="2.2" stroke-opacity="0.85" paint-order="stroke" stroke-linejoin="round">Loire</text>
<text x="539" y="460" font-size="10" letter-spacing="0.5" fill="#6597b8" font-weight="normal" font-style="italic" text-anchor="start" transform="rotate(-15 539 460)" stroke="#fff" stroke-width="2.2" stroke-opacity="0.85" paint-order="stroke" stroke-linejoin="round">Seine</text>
<text x="425" y="740" font-size="10" letter-spacing="0.3" fill="#6597b8" font-weight="normal" font-style="italic" text-anchor="start" transform="rotate(25 425 740)" stroke="#fff" stroke-width="2.2" stroke-opacity="0.85" paint-order="stroke" stroke-linejoin="round">Garonne</text>
<text x="616" y="725" font-size="10" letter-spacing="0.3" fill="#6597b8" font-weight="normal" font-style="italic" text-anchor="start" transform="rotate(-75 616 725)" stroke="#fff" stroke-width="2.2" stroke-opacity="0.85" paint-order="stroke" stroke-linejoin="round">Rhone</text>
<text x="613" y="211" font-size="10" letter-spacing="0.5" fill="#6597b8" font-weight="normal" font-style="italic" text-anchor="start" transform="rotate(-12 613 211)" stroke="#fff" stroke-width="2.2" stroke-opacity="0.85" paint-order="stroke" stroke-linejoin="round">Lek</text>
<text x="651.6" y="214" font-size="10" letter-spacing="0.5" fill="#6597b8" font-weight="normal" font-style="italic" text-anchor="start" transform="rotate(8 651.6 214)" stroke="#fff" stroke-width="2.2" stroke-opacity="0.85" paint-order="stroke" stroke-linejoin="round">Rhine</text>
<text x="625" y="314" font-size="10" letter-spacing="0.4" fill="#6597b8" font-weight="normal" font-style="italic" text-anchor="start" transform="rotate(-12 625 314)" stroke="#fff" stroke-width="2.2" stroke-opacity="0.85" paint-order="stroke" stroke-linejoin="round">Meuse</text>
<text x="838.2" y="682.5" font-size="10" letter-spacing="0.5" fill="#6597b8" font-weight="normal" font-style="italic" text-anchor="start" stroke="#fff" stroke-width="2.2" stroke-opacity="0.85" paint-order="stroke" stroke-linejoin="round">Po</text>
<text x="228.5" y="823" font-size="10" letter-spacing="0.4" fill="#6597b8" font-weight="normal" font-style="italic" text-anchor="start" transform="rotate(10 228.5 823)" stroke="#fff" stroke-width="2.2" stroke-opacity="0.85" paint-order="stroke" stroke-linejoin="round">Rio Ebro</text>
<g transform="translate(509,439.6)" opacity="0.62"><ellipse cx="20" cy="-20" rx="19" ry="5.5" transform="rotate(-43 20 -20)" fill="#222" filter="url(#shblur)"/></g>
<g transform="translate(756,450.6)" opacity="0.62"><ellipse cx="20" cy="-20" rx="19" ry="5.5" transform="rotate(-43 20 -20)" fill="#222" filter="url(#shblur)"/></g>
<g transform="translate(382,528.6)" opacity="0.62"><ellipse cx="20" cy="-20" rx="19" ry="5.5" transform="rotate(-43 20 -20)" fill="#222" filter="url(#shblur)"/></g>
<g transform="translate(461,635.6)" opacity="0.62"><ellipse cx="20" cy="-20" rx="19" ry="5.5" transform="rotate(-43 20 -20)" fill="#222" filter="url(#shblur)"/></g>
<g transform="translate(622,645.6)" opacity="0.62"><ellipse cx="20" cy="-20" rx="19" ry="5.5" transform="rotate(-43 20 -20)" fill="#222" filter="url(#shblur)"/></g>
<g transform="translate(509,407)"><path d="M0,32.6 L-12.3,6.6 A14,14 0 1,1 12.3,6.6 Z" fill="#ffa500" stroke="#c98200" stroke-width="0.8"/><circle cx="0" cy="0" r="6.2" fill="#fff"/></g>
<g transform="translate(756,418)"><path d="M0,32.6 L-12.3,6.6 A14,14 0 1,1 12.3,6.6 Z" fill="#82bf5c" stroke="#5e8f41" stroke-width="0.8"/><circle cx="0" cy="0" r="6.2" fill="#fff"/></g>
<g transform="translate(382,496)"><path d="M0,32.6 L-12.3,6.6 A14,14 0 1,1 12.3,6.6 Z" fill="#fd6626" stroke="#b9471a" stroke-width="0.8"/><circle cx="0" cy="0" r="6.2" fill="#fff"/></g>
<g transform="translate(461,603)"><path d="M0,32.6 L-12.3,6.6 A14,14 0 1,1 12.3,6.6 Z" fill="#82bf5c" stroke="#5e8f41" stroke-width="0.8"/><circle cx="0" cy="0" r="6.2" fill="#fff"/></g>
<g transform="translate(622,613)"><path d="M0,32.6 L-12.3,6.6 A14,14 0 1,1 12.3,6.6 Z" fill="#ffa500" stroke="#c98200" stroke-width="0.8"/><circle cx="0" cy="0" r="6.2" fill="#fff"/></g>
<rect x="220" y="160" width="32" height="62" rx="3" fill="#fff" stroke="#bdbdbd" stroke-width="2"/>
<line x1="221" y1="191" x2="251" y2="191" stroke="#c4c4c4" stroke-width="1"/>
<path d="M229.9,176 L242.2,176 M236,169.9 L236,182" stroke="#0a6fd8" stroke-width="2.6"/>
<path d="M231.3,205.8 L242.2,205.8" stroke="#0a6fd8" stroke-width="2.6"/>
</svg><!--/MAP--></div>
  <div class="card" id="chart" style="left:740px;top:90px;width:540px;height:310px">
    <svg class="abs" style="left:0;top:0" width="540" height="310" viewBox="939 149 540 310" font-family="Liberation Sans, sans-serif">
      <path d="M1195,301 L1195.00,213.00 A88,88 0 0,1 1246.73,372.19 Z" fill="#8bbf63" stroke="#fff" stroke-width="1.2" stroke-linejoin="round"/>
      <path d="M1195,301 L1246.73,372.19 A88,88 0 0,1 1111.31,273.81 Z" fill="#ffa500" stroke="#fff" stroke-width="1.2" stroke-linejoin="round"/>
      <path d="M1195,301 L1111.31,273.81 A88,88 0 0,1 1195.00,213.00 Z" fill="#fd6626" stroke="#fff" stroke-width="1.2" stroke-linejoin="round"/>
      <path d="M1195,213 L1195,195 C1195,187 1196,183 1200,181.5" fill="none" stroke="#5fa8e8" stroke-width="1"/>
      <path d="M1143,229.5 C1136,218 1130,208 1120,204.5" fill="none" stroke="#fd6626" stroke-width="1"/>
      <path d="M1279,273.5 C1290,270 1300,266 1312.5,263.5" fill="none" stroke="#8bbf63" stroke-width="1"/>
      <path d="M1143,373 C1136,384 1130,394 1120,397.5" fill="none" stroke="#ffa500" stroke-width="1"/>
      <g font-size="11.7" font-weight="bold" fill="#333">
        <text x="1210.5" y="189">Arret: 0.0 %</text>
        <text x="1109" y="210.5" text-anchor="end">Manuel: 20.0 %</text>
        <text x="1323" y="270.5">Auto: 40.0 %</text>
        <text x="1109" y="403.5" text-anchor="end">Confort: 40.0 %</text>
      </g>
      <g fill="#666">
        <rect x="1411.5" y="173.5" width="17" height="2.6" rx="1"/>
        <rect x="1411.5" y="178.8" width="17" height="2.6" rx="1"/>
        <rect x="1411.5" y="184.1" width="17" height="2.6" rx="1"/>
      </g>
    </svg>
  </div>
  <div class="card" id="tbl" style="left:740px;top:410px;width:540px;height:500px">
    <div class="abs" style="left:271px;top:37px;font-size:15.2px;color:#4a4a4a;letter-spacing:-0.2px;line-height:20px">Search:</div>
    <div class="abs" style="left:329px;top:28px;width:220px;height:36px;border:1px solid #cfcfcf;border-radius:2px"></div>
    <div class="abs" style="left:25px;top:100px;width:462px;height:237px;border:1px solid #e3e6ea">
      <div class="abs" style="left:279px;top:0;width:1px;height:235px;background:#e3e6ea"></div>
      <div class="abs th" style="left:10px;top:11px">Display Name</div>
      <div class="abs th" style="left:290px;top:11px">Fonctionnement</div>
      <svg class="abs" style="left:257px;top:11px" width="14" height="12" viewBox="0 0 14 12"><path d="M4.2,1.2 L4.2,10.5 M1.5,3.8 L4.2,1.2 L6.9,3.8 M10.7,1.2 L10.7,10.5 M8,8 L10.7,10.6 L13.4,8" fill="none" stroke="#cfcfcf" stroke-width="1.1"/></svg>
      <svg class="abs" style="left:438px;top:11px" width="14" height="12" viewBox="0 0 14 12"><path d="M4.2,1.2 L4.2,10.5 M1.5,3.8 L4.2,1.2 L6.9,3.8 M10.7,1.2 L10.7,10.5 M8,8 L10.7,10.6 L13.4,8" fill="none" stroke="#cfcfcf" stroke-width="1.1"/></svg>
      <div class="abs" style="left:0;top:38.5px;width:460px;height:2.5px;background:#e3e8ee"></div>
      <div class="abs" style="left:0;top:40.5px;width:461px;height:39px;border-top:0px solid #e5e8ec"><div class="abs td" style="left:10px;top:11.5px">Siège (VayanData Paris)</div><div class="abs td" style="left:290px;top:11.5px">Confort</div></div><div class="abs" style="left:0;top:78.5px;width:461px;height:40px;border-top:1px solid #e5e8ec"><div class="abs td" style="left:10px;top:11.5px">Locaux PAB (VayanData Strasbourg)</div><div class="abs td" style="left:290px;top:11.5px">Auto</div></div><div class="abs" style="left:0;top:117.5px;width:461px;height:40px;border-top:1px solid #e5e8ec"><div class="abs td" style="left:10px;top:11.5px">Site Exemple</div><div class="abs td" style="left:290px;top:11.5px">Manuel</div></div><div class="abs" style="left:0;top:156.5px;width:461px;height:40px;border-top:1px solid #e5e8ec"><div class="abs td" style="left:10px;top:11.5px">Tour J1 (Lyon)</div><div class="abs td" style="left:290px;top:11.5px">Confort</div></div><div class="abs" style="left:0;top:195.5px;width:461px;height:40px;border-top:1px solid #e5e8ec"><div class="abs td" style="left:10px;top:11.5px">Mairie (Limoges)</div><div class="abs td" style="left:290px;top:11.5px">Auto</div></div>
    </div>
  </div>
</div>
<div id="scroll" class="abs">
  <div class="abs" style="left:2px;top:17px;width:12.6px;height:667.5px;background:#c1c1c1"></div>
  <svg class="abs" style="left:0;top:0" width="16" height="787" viewBox="1444 59 16 787">
    <path d="M1448.5,70.5 L1456.5,70.5 L1452.5,66.3 Z" fill="#a3a3a3"/>
    <path d="M1448.8,835.4 L1456.3,835.4 L1452.5,839.8 Z" fill="#505050"/>
  </svg>
</div>
</body></html>
